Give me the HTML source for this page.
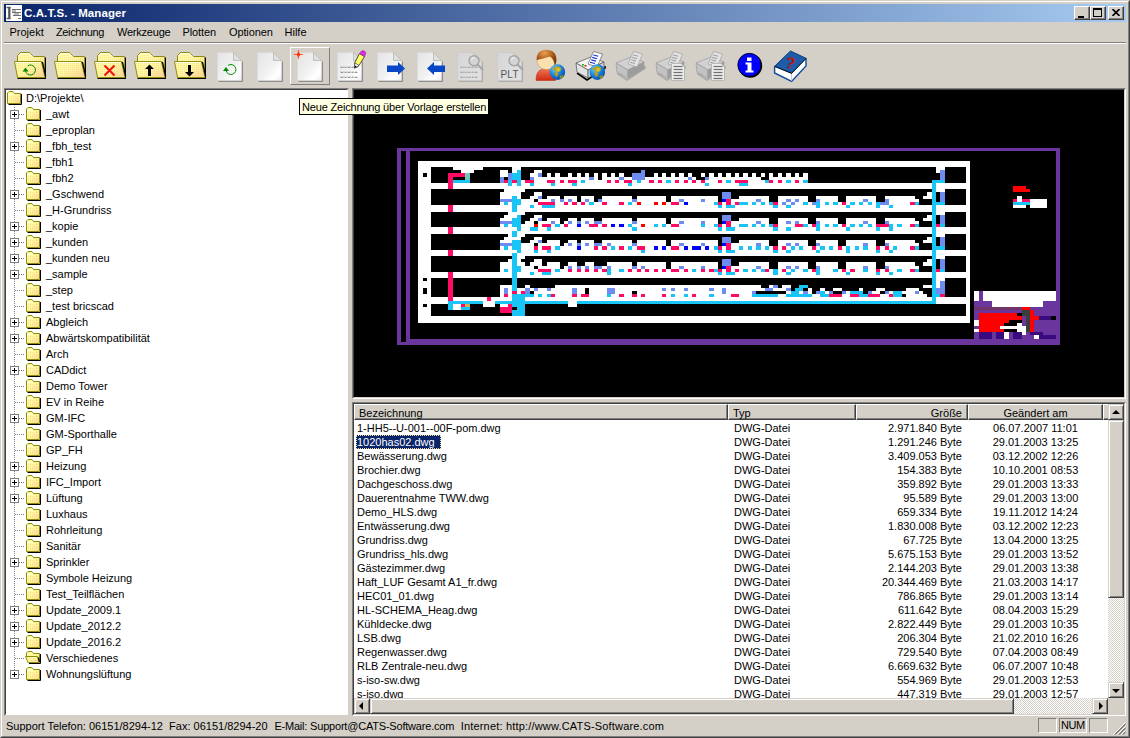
<!DOCTYPE html><html lang="de"><head><meta charset="utf-8"><title>C.A.T.S. - Manager</title><style>
html,body{margin:0;padding:0}
body{width:1130px;height:738px;overflow:hidden;background:#D4D0C8;position:relative;
 font-family:"Liberation Sans",sans-serif;font-size:11px;color:#000;line-height:13px}
.a{position:absolute}
.t{position:absolute;white-space:pre;height:13px;line-height:13px}
#title{left:4px;top:4px;width:1122px;height:18px;background:linear-gradient(to right,#0A246A 0%,#A6CAF0 100%)}
#title .cap{left:20px;top:2.5px;color:#fff;font-weight:bold;font-size:11.5px;letter-spacing:0.1px}
.cb{position:absolute;top:2px;width:16px;height:14px;background:#D4D0C8;box-sizing:border-box;
 border:1px solid;border-color:#fff #404040 #404040 #fff;box-shadow:inset -1px -1px 0 #808080}
.menu .t{top:26px}
.raised{box-sizing:border-box;border:1px solid;border-color:#fff #808080 #808080 #fff}
.sunk{box-sizing:border-box;border:1px solid;border-color:#808080 #fff #fff #808080}
.sunk2{box-sizing:border-box;border:2px solid;border-color:#808080 #fff #fff #808080}
.hdr{position:absolute;top:0;height:16px;background:#D4D0C8;box-sizing:border-box;border:1px solid;border-color:#fff #404040 #404040 #fff;box-shadow:inset -1px -1px 0 #808080}
.sbb{position:absolute;width:16px;height:16px;background:#D4D0C8;box-sizing:border-box;border:1px solid;border-color:#D4D0C8 #404040 #404040 #D4D0C8;box-shadow:inset 1px 1px 0 #fff, inset -1px -1px 0 #808080}
.track{position:absolute;background-color:#EAE8E4;background-image:conic-gradient(#fff 25%,#D4D0C8 0 50%,#fff 0 75%,#D4D0C8 0);background-size:2px 2px}
.tri{position:absolute;width:0;height:0;border:4px solid transparent}
</style></head><body>
<div class="a" style="left:0;top:0;width:1130px;height:738px;box-sizing:border-box;border:1px solid;border-color:#D4D0C8 #404040 #404040 #D4D0C8"></div>
<div class="a" style="left:1px;top:1px;width:1128px;height:736px;box-sizing:border-box;border:1px solid;border-color:#fff #808080 #808080 #fff"></div>
<div id="title" class="a"><svg class="a" style="left:2px;top:1px" width="16" height="16" viewBox="0 0 16 16" ><rect x="0" y="0" width="16" height="16" fill="#fff"/><path d="M0.5 2.5H4.5M0.5 13.5H4.5" fill="none" stroke="#606060" stroke-width="1.4"/><path d="M3.3 2V14" fill="none" stroke="#505050" stroke-width="2.2"/><path d="M6 4.5H15M6 7.5H15M7 10.5H15M12 13.5H15M6 6H10M8 9H13" stroke="#707070" fill="none"/></svg><span class="t cap">C.A.T.S. - Manager</span>
<div class="cb" style="left:1070px"><div class="a" style="left:3px;top:9px;width:6px;height:2px;background:#000"></div></div>
<div class="cb" style="left:1086px"><div class="a" style="left:2px;top:1px;width:9px;height:9px;box-sizing:border-box;border:1px solid #000;border-top-width:2px"></div></div>
<div class="cb" style="left:1104px"><svg class="a" style="left:3px;top:2px" width="8" height="7" viewBox="0 0 8 7"><path d="M0.5 0L7.5 7M7.5 0L0.5 7" stroke="#000" stroke-width="1.6" fill="none"/></svg></div>
</div>
<div class="menu">
<span class="t" style="left:9.5px;letter-spacing:0px">Projekt</span>
<span class="t" style="left:56px;letter-spacing:-0.37px">Zeichnung</span>
<span class="t" style="left:117px;letter-spacing:-0.22px">Werkzeuge</span>
<span class="t" style="left:182.5px;letter-spacing:-0.1px">Plotten</span>
<span class="t" style="left:229px;letter-spacing:-0.12px">Optionen</span>
<span class="t" style="left:284.5px;letter-spacing:0px">Hilfe</span>
</div>
<div class="a" style="left:4px;top:42px;width:1122px;height:1px;background:#808080"></div>
<div class="a" style="left:4px;top:43px;width:1122px;height:1px;background:#fff"></div>
<div class="a raised" style="left:290px;top:47px;width:40px;height:38px"></div>
<svg width="0" height="0" style="position:absolute"><defs><linearGradient id="gPage" x1="0" y1="0" x2="1" y2="1"><stop offset="0" stop-color="#E4E4E4"/><stop offset="0.55" stop-color="#F1F1F1"/><stop offset="0.8" stop-color="#FFFFFF"/><stop offset="1" stop-color="#ECECEC"/></linearGradient><linearGradient id="gPageD" x1="0" y1="0" x2="1" y2="1"><stop offset="0" stop-color="#D6D6D6"/><stop offset="1" stop-color="#E2E2E2"/></linearGradient><pattern id="dith" width="2" height="2" patternUnits="userSpaceOnUse"><rect x="0" y="0" width="1" height="1" fill="#FBC8A0"/></pattern><linearGradient id="gFold" x1="0" y1="0" x2="1" y2="1"><stop offset="0" stop-color="#FFFFA2"/><stop offset="0.5" stop-color="#FFF69A"/><stop offset="1" stop-color="#FAD294"/></linearGradient><radialGradient id="gGlobe" cx="0.35" cy="0.3" r="0.8"><stop offset="0" stop-color="#6FD0FF"/><stop offset="0.5" stop-color="#1586E0"/><stop offset="1" stop-color="#0B3FA0"/></radialGradient><radialGradient id="gHair" cx="0.4" cy="0.2" r="0.9"><stop offset="0" stop-color="#E8A050"/><stop offset="0.6" stop-color="#9A4A10"/><stop offset="1" stop-color="#5A2800"/></radialGradient><linearGradient id="gBody" x1="0" y1="0" x2="0" y2="1"><stop offset="0" stop-color="#F07050"/><stop offset="1" stop-color="#D02810"/></linearGradient><linearGradient id="gPrn" x1="0" y1="0" x2="1" y2="0"><stop offset="0" stop-color="#E6E6E6"/><stop offset="0.5" stop-color="#C4C4C4"/><stop offset="1" stop-color="#9C9C9C"/></linearGradient></defs></svg>
<svg class="a" style="left:14px;top:49px" width="32" height="34" viewBox="0 0 32 34" overflow="visible"><path d="M3.5 13V6.5L6.5 3.5H15.5L19.5 7.5H30.5V28.5H4Z" fill="url(#gFold)" stroke="#8C8C10"/><path d="M3.5 13V6.5L6.5 3.5H15.5L19.5 7.5H30.5V28.5H4Z" fill="url(#dith)" fill-opacity="0.55"/><path d="M31.5 8.5V29.5H5" fill="none" stroke="#000"/><path d="M4.6 7L7 4.6H15L18.5 8.5" fill="none" stroke="#FFFFF0"/><path d="M0.5 12.5H27.3L31 28.5H3.5Z" fill="url(#gFold)" stroke="#8C8C10"/><path d="M1.5 13.5H26.5L30 27.5H4.3Z" fill="url(#dith)" fill-opacity="0.55"/><path d="M28.4 12.8L31.7 27.5" fill="none" stroke="#000" stroke-width="1.3"/><path d="M1.5 13.5H26.8" stroke="#FFFFE8" fill="none"/><path d="M3.5 29.5H31.8" stroke="#000" fill="none"/><path d="M13.6 16.9A5 5 0 1 1 11.5 21.8" fill="none" stroke="#008A00" stroke-width="1"/><path d="M8.5 22.5L11.5 18.6L14.5 22.5Z" fill="#008A00"/></svg>
<svg class="a" style="left:54px;top:49px" width="32" height="34" viewBox="0 0 32 34" overflow="visible"><path d="M3.5 13V6.5L6.5 3.5H15.5L19.5 7.5H30.5V28.5H4Z" fill="url(#gFold)" stroke="#8C8C10"/><path d="M3.5 13V6.5L6.5 3.5H15.5L19.5 7.5H30.5V28.5H4Z" fill="url(#dith)" fill-opacity="0.55"/><path d="M31.5 8.5V29.5H5" fill="none" stroke="#000"/><path d="M4.6 7L7 4.6H15L18.5 8.5" fill="none" stroke="#FFFFF0"/><path d="M0.5 12.5H27.3L31 28.5H3.5Z" fill="url(#gFold)" stroke="#8C8C10"/><path d="M1.5 13.5H26.5L30 27.5H4.3Z" fill="url(#dith)" fill-opacity="0.55"/><path d="M28.4 12.8L31.7 27.5" fill="none" stroke="#000" stroke-width="1.3"/><path d="M1.5 13.5H26.8" stroke="#FFFFE8" fill="none"/><path d="M3.5 29.5H31.8" stroke="#000" fill="none"/></svg>
<svg class="a" style="left:94px;top:49px" width="32" height="34" viewBox="0 0 32 34" overflow="visible"><path d="M3.5 13V6.5L6.5 3.5H15.5L19.5 7.5H30.5V28.5H4Z" fill="url(#gFold)" stroke="#8C8C10"/><path d="M3.5 13V6.5L6.5 3.5H15.5L19.5 7.5H30.5V28.5H4Z" fill="url(#dith)" fill-opacity="0.55"/><path d="M31.5 8.5V29.5H5" fill="none" stroke="#000"/><path d="M4.6 7L7 4.6H15L18.5 8.5" fill="none" stroke="#FFFFF0"/><path d="M0.5 12.5H27.3L31 28.5H3.5Z" fill="url(#gFold)" stroke="#8C8C10"/><path d="M1.5 13.5H26.5L30 27.5H4.3Z" fill="url(#dith)" fill-opacity="0.55"/><path d="M28.4 12.8L31.7 27.5" fill="none" stroke="#000" stroke-width="1.3"/><path d="M1.5 13.5H26.8" stroke="#FFFFE8" fill="none"/><path d="M3.5 29.5H31.8" stroke="#000" fill="none"/><path d="M10.5 16.5L20.5 26.5M20.5 16.5L10.5 26.5" stroke="#F01010" stroke-width="2" fill="none"/></svg>
<svg class="a" style="left:134px;top:49px" width="32" height="34" viewBox="0 0 32 34" overflow="visible"><path d="M3.5 13V6.5L6.5 3.5H15.5L19.5 7.5H30.5V28.5H4Z" fill="url(#gFold)" stroke="#8C8C10"/><path d="M3.5 13V6.5L6.5 3.5H15.5L19.5 7.5H30.5V28.5H4Z" fill="url(#dith)" fill-opacity="0.55"/><path d="M31.5 8.5V29.5H5" fill="none" stroke="#000"/><path d="M4.6 7L7 4.6H15L18.5 8.5" fill="none" stroke="#FFFFF0"/><path d="M0.5 12.5H27.3L31 28.5H3.5Z" fill="url(#gFold)" stroke="#8C8C10"/><path d="M1.5 13.5H26.5L30 27.5H4.3Z" fill="url(#dith)" fill-opacity="0.55"/><path d="M28.4 12.8L31.7 27.5" fill="none" stroke="#000" stroke-width="1.3"/><path d="M1.5 13.5H26.8" stroke="#FFFFE8" fill="none"/><path d="M3.5 29.5H31.8" stroke="#000" fill="none"/><path d="M14 27V20H11L15.5 15.5L20 20H17V27Z" fill="#000"/></svg>
<svg class="a" style="left:174px;top:49px" width="32" height="34" viewBox="0 0 32 34" overflow="visible"><path d="M3.5 13V6.5L6.5 3.5H15.5L19.5 7.5H30.5V28.5H4Z" fill="url(#gFold)" stroke="#8C8C10"/><path d="M3.5 13V6.5L6.5 3.5H15.5L19.5 7.5H30.5V28.5H4Z" fill="url(#dith)" fill-opacity="0.55"/><path d="M31.5 8.5V29.5H5" fill="none" stroke="#000"/><path d="M4.6 7L7 4.6H15L18.5 8.5" fill="none" stroke="#FFFFF0"/><path d="M0.5 12.5H27.3L31 28.5H3.5Z" fill="url(#gFold)" stroke="#8C8C10"/><path d="M1.5 13.5H26.5L30 27.5H4.3Z" fill="url(#dith)" fill-opacity="0.55"/><path d="M28.4 12.8L31.7 27.5" fill="none" stroke="#000" stroke-width="1.3"/><path d="M1.5 13.5H26.8" stroke="#FFFFE8" fill="none"/><path d="M3.5 29.5H31.8" stroke="#000" fill="none"/><path d="M14 16V23H11L15.5 27.5L20 23H17V16Z" fill="#000"/></svg>
<svg class="a" style="left:214px;top:49px" width="32" height="34" viewBox="0 0 32 34" overflow="visible"><path d="M4.5 32.1H28.1V12.5" fill="none" stroke="#8E8E8E" stroke-width="1.9"/><path d="M3.5 3.5H19.5L27.5 11.5V31.5H3.5Z" fill="url(#gPage)" stroke="#D8D8D8" stroke-width="0.6"/><path d="M19.5 3.5V11.5H27.5Z" fill="#E0E0E0" stroke="#B0B0B0" stroke-width="0.7"/><path d="M14.1 16.4A5 5 0 1 1 12.0 21.3" fill="none" stroke="#008A00" stroke-width="1"/><path d="M9.0 22.0L12.0 18.1L15.0 22.0Z" fill="#008A00"/></svg>
<svg class="a" style="left:254px;top:49px" width="32" height="34" viewBox="0 0 32 34" overflow="visible"><path d="M4.5 32.1H28.1V12.5" fill="none" stroke="#8E8E8E" stroke-width="1.9"/><path d="M3.5 3.5H19.5L27.5 11.5V31.5H3.5Z" fill="url(#gPage)" stroke="#D8D8D8" stroke-width="0.6"/><path d="M19.5 3.5V11.5H27.5Z" fill="#E0E0E0" stroke="#B0B0B0" stroke-width="0.7"/></svg>
<svg class="a" style="left:294px;top:49px" width="32" height="34" viewBox="0 0 32 34" overflow="visible"><path d="M4.5 32.1H28.1V12.5" fill="none" stroke="#8E8E8E" stroke-width="1.9"/><path d="M3.5 3.5H19.5L27.5 11.5V31.5H3.5Z" fill="url(#gPage)" stroke="#D8D8D8" stroke-width="0.6"/><path d="M19.5 3.5V11.5H27.5Z" fill="#E0E0E0" stroke="#B0B0B0" stroke-width="0.7"/><path d="M4.5 1V10M0 5.5H9" stroke="#FF6020" stroke-width="1" fill="none"/><path d="M4.5 2.5L6.5 5.5L4.5 8.5L2.5 5.5Z" fill="#FF3010"/></svg>
<svg class="a" style="left:334px;top:49px" width="32" height="34" viewBox="0 0 32 34" overflow="visible"><path d="M4.5 32.1H28.1V12.5" fill="none" stroke="#8E8E8E" stroke-width="1.9"/><path d="M3.5 3.5H19.5L27.5 11.5V31.5H3.5Z" fill="url(#gPage)" stroke="#D8D8D8" stroke-width="0.6"/><path d="M19.5 3.5V11.5H27.5Z" fill="#E0E0E0" stroke="#B0B0B0" stroke-width="0.7"/><path d="M6.5 18.5H23.5" stroke="#9A9A9A" stroke-dasharray="3 1 2 1" fill="none"/><path d="M6.5 17.5H23.5" stroke="#9A9A9A" stroke-dasharray="1 2" stroke-opacity="0.7" fill="none"/><path d="M6.5 23.5H23.5" stroke="#9A9A9A" stroke-dasharray="3 1 2 1" fill="none"/><path d="M6.5 22.5H23.5" stroke="#9A9A9A" stroke-dasharray="1 2" stroke-opacity="0.7" fill="none"/><path d="M6.5 28.5H23.5" stroke="#9A9A9A" stroke-dasharray="3 1 2 1" fill="none"/><path d="M6.5 27.5H23.5" stroke="#9A9A9A" stroke-dasharray="1 2" stroke-opacity="0.7" fill="none"/><path d="M20.8 13.5L25.5 4.5L30.5 7.5L25 16.5L20.6 19Z" fill="#FFFF66" stroke="#202020" stroke-width="0.8"/><path d="M25.5 4.5Q27.5 0.5 30.5 2Q33 4 30.5 7.5Z" fill="#E428E4" stroke="#802080" stroke-width="0.5"/><path d="M20.8 13.8L25 16.5L20.5 19.2Z" fill="#fff" stroke="#202020" stroke-width="0.6"/><path d="M21.3 16.5L22.6 17.7L20.5 19.2Z" fill="#000"/></svg>
<svg class="a" style="left:374px;top:49px" width="32" height="34" viewBox="0 0 32 34" overflow="visible"><path d="M4.5 32.1H28.1V12.5" fill="none" stroke="#8E8E8E" stroke-width="1.9"/><path d="M3.5 3.5H19.5L27.5 11.5V31.5H3.5Z" fill="url(#gPage)" stroke="#D8D8D8" stroke-width="0.6"/><path d="M19.5 3.5V11.5H27.5Z" fill="#E0E0E0" stroke="#B0B0B0" stroke-width="0.7"/><path d="M13 16.5H24V13L31 19.5L24 26V23H13Z" fill="#0848C8"/></svg>
<svg class="a" style="left:414px;top:49px" width="32" height="34" viewBox="0 0 32 34" overflow="visible"><path d="M4.5 32.1H28.1V12.5" fill="none" stroke="#8E8E8E" stroke-width="1.9"/><path d="M3.5 3.5H19.5L27.5 11.5V31.5H3.5Z" fill="url(#gPage)" stroke="#D8D8D8" stroke-width="0.6"/><path d="M19.5 3.5V11.5H27.5Z" fill="#E0E0E0" stroke="#B0B0B0" stroke-width="0.7"/><path d="M31 16.5H20V13L13 19.5L20 26V23H31Z" fill="#0848C8"/></svg>
<svg class="a" style="left:454px;top:49px" width="32" height="34" viewBox="0 0 32 34" overflow="visible"><path d="M4.5 32.1H28.1V12.5" fill="none" stroke="#ACACAC" stroke-width="1.9"/><path d="M3.5 3.5H19.5L27.5 11.5V31.5H3.5Z" fill="url(#gPageD)" stroke="#C8C8C8" stroke-width="0.6"/><path d="M19.5 3.5V11.5H27.5Z" fill="#DADADA" stroke="#BEBEBE" stroke-width="0.7"/><path d="M6.5 18.5H23.5" stroke="#A8A8A8" stroke-dasharray="3 1 2 1" fill="none"/><path d="M6.5 17.5H23.5" stroke="#A8A8A8" stroke-dasharray="1 2" stroke-opacity="0.7" fill="none"/><path d="M6.5 23.5H23.5" stroke="#A8A8A8" stroke-dasharray="3 1 2 1" fill="none"/><path d="M6.5 22.5H23.5" stroke="#A8A8A8" stroke-dasharray="1 2" stroke-opacity="0.7" fill="none"/><path d="M6.5 28.5H23.5" stroke="#A8A8A8" stroke-dasharray="3 1 2 1" fill="none"/><path d="M6.5 27.5H23.5" stroke="#A8A8A8" stroke-dasharray="1 2" stroke-opacity="0.7" fill="none"/><path d="M23.5 15.5L28.5 20.5" stroke="#A8A8A8" stroke-width="2.4" stroke-linecap="round"/><circle cx="20" cy="11.8" r="5" fill="#D4D4D4" stroke="#A4A4A4" stroke-width="1.5"/><path d="M17.5 10.5Q18.5 8 21 8.8" stroke="#F0F0F0" stroke-width="1.4" fill="none"/></svg>
<svg class="a" style="left:494px;top:49px" width="32" height="34" viewBox="0 0 32 34" overflow="visible"><path d="M4.5 32.1H28.1V12.5" fill="none" stroke="#ACACAC" stroke-width="1.9"/><path d="M3.5 3.5H19.5L27.5 11.5V31.5H3.5Z" fill="url(#gPageD)" stroke="#C8C8C8" stroke-width="0.6"/><path d="M19.5 3.5V11.5H27.5Z" fill="#DADADA" stroke="#BEBEBE" stroke-width="0.7"/><path d="M23.5 15.5L28.5 20.5" stroke="#A8A8A8" stroke-width="2.4" stroke-linecap="round"/><circle cx="20" cy="11.8" r="5" fill="#D4D4D4" stroke="#A4A4A4" stroke-width="1.5"/><path d="M17.5 10.5Q18.5 8 21 8.8" stroke="#F0F0F0" stroke-width="1.4" fill="none"/><text x="6.5" y="28.5" font-family="Liberation Sans,sans-serif" font-size="10" fill="#585858" textLength="18">PLT</text></svg>
<svg class="a" style="left:534px;top:49px" width="32" height="34" viewBox="0 0 32 34" overflow="visible"><path d="M2 31.5Q2 21.5 8 20.5H15Q21 21.5 21.5 31.5Z" fill="url(#gBody)" stroke="#B83818" stroke-width="0.6"/><circle cx="12.5" cy="10.8" r="9.8" fill="#FCE0B0" stroke="#C89858" stroke-width="0.6"/><path d="M2.8 11Q2 1 12.5 1Q23 1 22.3 12Q22 15 20.5 16.5Q20.5 10.5 16 7.5Q9 9.5 2.8 11Z" fill="url(#gHair)"/><circle cx="23.4" cy="23.1" r="7.8" fill="url(#gGlobe)"/><path d="M20.4 18.1l4 -1l3 2l-1 3l-3 1l1 3l-2 2l-2 -3l1 -3l-3 -2z" fill="#B8A020"/><path d="M25.4 27.1l3 -1l1 2l-3 2z" fill="#8A9020"/><path d="M22.4 19.1l3 0l1 2l-2 2l-2-1z" fill="#D8C030"/></svg>
<svg class="a" style="left:574px;top:49px" width="32" height="34" viewBox="0 0 32 34" overflow="visible"><path d="M3 24L13 31L31 19L31 17" fill="none" stroke="#000" stroke-width="1.6"/><path d="M2 14L17 8L30 13L14 21Z" fill="#F4F4F4" stroke="#606060" stroke-width="0.8"/><path d="M2 14L14 21V29L3 23Z" fill="#E4E4E4" stroke="#606060" stroke-width="0.8"/><path d="M14 21L30 13V20L14 29Z" fill="#D0D0D0" stroke="#606060" stroke-width="0.8"/><path d="M14 15L19.5 2.5L28.5 5L23 18Z" fill="#FFFFFF" stroke="#606060" stroke-width="0.7"/><path d="M19.3 6.0l5 1.3" stroke="#1030D0" stroke-width="1.1" fill="none"/><path d="M18.2 8.4l5 1.3" stroke="#1030D0" stroke-width="1.1" fill="none"/><path d="M17.1 10.8l5 1.3" stroke="#1030D0" stroke-width="1.1" fill="none"/><path d="M16.0 13.2l5 1.3" stroke="#1030D0" stroke-width="1.1" fill="none"/><rect x="8" y="15" width="2" height="1.5" fill="#10C010"/><rect x="10.5" y="16" width="2" height="1.5" fill="#E01010"/><circle cx="23.3" cy="23.1" r="7.8" fill="url(#gGlobe)"/><path d="M20.3 18.1l4 -1l3 2l-1 3l-3 1l1 3l-2 2l-2 -3l1 -3l-3 -2z" fill="#B8A020"/><path d="M25.3 27.1l3 -1l1 2l-3 2z" fill="#8A9020"/><path d="M22.3 19.1l3 0l1 2l-2 2l-2-1z" fill="#D8C030"/></svg>
<svg class="a" style="left:614px;top:49px" width="32" height="34" viewBox="0 0 32 34" overflow="visible"><path d="M3 24L13 31L31 19L31 17" fill="none" stroke="#A8A8A8" stroke-width="1.6"/><path d="M2 14L17 8L30 13L14 21Z" fill="#D2D2D2" stroke="#A0A0A0" stroke-width="0.8"/><path d="M2 14L14 21V29L3 23Z" fill="#C2C2C2" stroke="#A0A0A0" stroke-width="0.8"/><path d="M14 21L30 13V20L14 29Z" fill="#9C9C9C" stroke="#A0A0A0" stroke-width="0.8"/><path d="M14 15L19.5 2.5L28.5 5L23 18Z" fill="#E4E4E4" stroke="#A0A0A0" stroke-width="0.7"/><path d="M19.3 6.0l5 1.3" stroke="#A0A0A0" stroke-width="1.1" fill="none"/><path d="M18.2 8.4l5 1.3" stroke="#A0A0A0" stroke-width="1.1" fill="none"/><path d="M17.1 10.8l5 1.3" stroke="#A0A0A0" stroke-width="1.1" fill="none"/><path d="M16.0 13.2l5 1.3" stroke="#A0A0A0" stroke-width="1.1" fill="none"/></svg>
<svg class="a" style="left:654px;top:49px" width="32" height="34" viewBox="0 0 32 34" overflow="visible"><path d="M3 24L13 31L31 19L31 17" fill="none" stroke="#A8A8A8" stroke-width="1.6"/><path d="M2 14L17 8L30 13L14 21Z" fill="#D2D2D2" stroke="#A0A0A0" stroke-width="0.8"/><path d="M2 14L14 21V29L3 23Z" fill="#C2C2C2" stroke="#A0A0A0" stroke-width="0.8"/><path d="M14 21L30 13V20L14 29Z" fill="#9C9C9C" stroke="#A0A0A0" stroke-width="0.8"/><path d="M14 15L19.5 2.5L28.5 5L23 18Z" fill="#E4E4E4" stroke="#A0A0A0" stroke-width="0.7"/><path d="M19.3 6.0l5 1.3" stroke="#A0A0A0" stroke-width="1.1" fill="none"/><path d="M18.2 8.4l5 1.3" stroke="#A0A0A0" stroke-width="1.1" fill="none"/><path d="M17.1 10.8l5 1.3" stroke="#A0A0A0" stroke-width="1.1" fill="none"/><path d="M16.0 13.2l5 1.3" stroke="#A0A0A0" stroke-width="1.1" fill="none"/><path d="M17.5 14.5H27L30.5 18V31.5H17.5Z" fill="#EDEDED" stroke="#B8B8B8"/><path d="M19.5 17.5H28.5" stroke="#707070" stroke-width="1.2" fill="none"/><path d="M19.5 20.5H28.5" stroke="#707070" stroke-width="1.2" fill="none"/><path d="M19.5 23.5H28.5" stroke="#707070" stroke-width="1.2" fill="none"/><path d="M19.5 26.5H28.5" stroke="#707070" stroke-width="1.2" fill="none"/><path d="M19.5 29.5H28.5" stroke="#707070" stroke-width="1.2" fill="none"/></svg>
<svg class="a" style="left:694px;top:49px" width="32" height="34" viewBox="0 0 32 34" overflow="visible"><path d="M3 24L13 31L31 19L31 17" fill="none" stroke="#A8A8A8" stroke-width="1.6"/><path d="M2 14L17 8L30 13L14 21Z" fill="#D2D2D2" stroke="#A0A0A0" stroke-width="0.8"/><path d="M2 14L14 21V29L3 23Z" fill="#C2C2C2" stroke="#A0A0A0" stroke-width="0.8"/><path d="M14 21L30 13V20L14 29Z" fill="#9C9C9C" stroke="#A0A0A0" stroke-width="0.8"/><path d="M14 15L19.5 2.5L28.5 5L23 18Z" fill="#E4E4E4" stroke="#A0A0A0" stroke-width="0.7"/><path d="M19.3 6.0l5 1.3" stroke="#A0A0A0" stroke-width="1.1" fill="none"/><path d="M18.2 8.4l5 1.3" stroke="#A0A0A0" stroke-width="1.1" fill="none"/><path d="M17.1 10.8l5 1.3" stroke="#A0A0A0" stroke-width="1.1" fill="none"/><path d="M16.0 13.2l5 1.3" stroke="#A0A0A0" stroke-width="1.1" fill="none"/><path d="M17.5 14.5H27L30.5 18V31.5H17.5Z" fill="#EDEDED" stroke="#B8B8B8"/><path d="M19.5 17.5H28.5" stroke="#707070" stroke-width="1.2" fill="none"/><path d="M19.5 20.5H28.5" stroke="#707070" stroke-width="1.2" fill="none"/><path d="M19.5 23.5H28.5" stroke="#707070" stroke-width="1.2" fill="none"/><path d="M19.5 26.5H28.5" stroke="#707070" stroke-width="1.2" fill="none"/><path d="M19.5 29.5H28.5" stroke="#707070" stroke-width="1.2" fill="none"/></svg>
<svg class="a" style="left:734px;top:49px" width="32" height="34" viewBox="0 0 32 34" overflow="visible"><circle cx="16.2" cy="16.7" r="12" fill="#000"/><circle cx="15.4" cy="15.9" r="11.6" fill="#0000FF" stroke="#000" stroke-width="0.8"/><rect x="13" y="8.5" width="4.5" height="3.5" fill="#fff"/><path d="M11.5 13.5H17.5V21.5H19.5V23.5H11.5V21.5H13.5V15.5H11.5Z" fill="#fff"/></svg>
<svg class="a" style="left:774px;top:49px" width="32" height="34" viewBox="0 0 32 34" overflow="visible"><path d="M0.6 17.3V24L17.6 32.5L32 17V9.3" fill="#fff" stroke="#0C4C9C" stroke-width="1.4"/><path d="M17.6 24.2V32" stroke="#C8C8C8" fill="none"/><path d="M16.5 2L32 9.3L17.6 24.2L0.6 17.3Z" fill="#1C5CA8" stroke="#0A3C84" stroke-width="1"/><path d="M0.8 17.5L17.6 24.4L32 9.5" fill="none" stroke="#000" stroke-width="0.8"/><text x="11.5" y="19.5" font-family="Liberation Sans,sans-serif" font-weight="bold" font-size="16" fill="#B81414" transform="rotate(14 16 14)">?</text></svg>
<div class="a" style="left:4px;top:88px;width:345px;height:628px;background:#fff;box-sizing:border-box;border:1px solid;border-color:#808080 #D4D0C8 #D4D0C8 #808080"></div>
<div class="a" style="left:5px;top:89px;width:343px;height:626px;box-sizing:border-box;border:1px solid;border-color:#404040 #fff #fff #404040"></div>
<div class="a" id="tree" style="left:6px;top:90px;width:341px;height:624px;overflow:hidden">
<svg class="a" style="left:1px;top:0px" width="16" height="16" viewBox="0 0 16 16" ><path d="M0.5 13.5V3L2 1.5H6L7.5 3.5H13.5V13.5Z" fill="url(#gFold)" stroke="#8C8C10"/><path d="M1.5 4.5V12.5H12.5V4.5Z" fill="url(#dith)" fill-opacity="0.45"/><path d="M14.5 4V14.5H1.5" fill="none" stroke="#000"/><path d="M1.5 4.5H7" stroke="#FFFFF0" fill="none"/></svg>
<span class="t" style="left:20px;top:2px">D:\Projekte\</span>
<div class="a" style="left:8px;top:17px;width:1px;height:567px;background-image:linear-gradient(#808080 50%,transparent 50%);background-size:1px 2px"></div>
<div class="a" style="left:9px;top:24px;width:10px;height:1px;background-image:linear-gradient(to right,#808080 50%,transparent 50%);background-size:2px 1px"></div>
<div class="a" style="left:4px;top:20px;width:9px;height:9px;box-sizing:border-box;border:1px solid #808080;background:#fff"><div class="a" style="left:1px;top:3px;width:5px;height:1px;background:#000"></div><div class="a" style="left:3px;top:1px;width:1px;height:5px;background:#000"></div></div>
<svg class="a" style="left:20px;top:16px" width="16" height="16" viewBox="0 0 16 16" ><path d="M0.5 13.5V3L2 1.5H6L7.5 3.5H13.5V13.5Z" fill="url(#gFold)" stroke="#8C8C10"/><path d="M1.5 4.5V12.5H12.5V4.5Z" fill="url(#dith)" fill-opacity="0.45"/><path d="M14.5 4V14.5H1.5" fill="none" stroke="#000"/><path d="M1.5 4.5H7" stroke="#FFFFF0" fill="none"/></svg>
<span class="t" style="left:40px;top:18px">_awt</span>
<div class="a" style="left:9px;top:40px;width:10px;height:1px;background-image:linear-gradient(to right,#808080 50%,transparent 50%);background-size:2px 1px"></div>
<svg class="a" style="left:20px;top:32px" width="16" height="16" viewBox="0 0 16 16" ><path d="M0.5 13.5V3L2 1.5H6L7.5 3.5H13.5V13.5Z" fill="url(#gFold)" stroke="#8C8C10"/><path d="M1.5 4.5V12.5H12.5V4.5Z" fill="url(#dith)" fill-opacity="0.45"/><path d="M14.5 4V14.5H1.5" fill="none" stroke="#000"/><path d="M1.5 4.5H7" stroke="#FFFFF0" fill="none"/></svg>
<span class="t" style="left:40px;top:34px">_eproplan</span>
<div class="a" style="left:9px;top:56px;width:10px;height:1px;background-image:linear-gradient(to right,#808080 50%,transparent 50%);background-size:2px 1px"></div>
<div class="a" style="left:4px;top:52px;width:9px;height:9px;box-sizing:border-box;border:1px solid #808080;background:#fff"><div class="a" style="left:1px;top:3px;width:5px;height:1px;background:#000"></div><div class="a" style="left:3px;top:1px;width:1px;height:5px;background:#000"></div></div>
<svg class="a" style="left:20px;top:48px" width="16" height="16" viewBox="0 0 16 16" ><path d="M0.5 13.5V3L2 1.5H6L7.5 3.5H13.5V13.5Z" fill="url(#gFold)" stroke="#8C8C10"/><path d="M1.5 4.5V12.5H12.5V4.5Z" fill="url(#dith)" fill-opacity="0.45"/><path d="M14.5 4V14.5H1.5" fill="none" stroke="#000"/><path d="M1.5 4.5H7" stroke="#FFFFF0" fill="none"/></svg>
<span class="t" style="left:40px;top:50px">_fbh_test</span>
<div class="a" style="left:9px;top:72px;width:10px;height:1px;background-image:linear-gradient(to right,#808080 50%,transparent 50%);background-size:2px 1px"></div>
<svg class="a" style="left:20px;top:64px" width="16" height="16" viewBox="0 0 16 16" ><path d="M0.5 13.5V3L2 1.5H6L7.5 3.5H13.5V13.5Z" fill="url(#gFold)" stroke="#8C8C10"/><path d="M1.5 4.5V12.5H12.5V4.5Z" fill="url(#dith)" fill-opacity="0.45"/><path d="M14.5 4V14.5H1.5" fill="none" stroke="#000"/><path d="M1.5 4.5H7" stroke="#FFFFF0" fill="none"/></svg>
<span class="t" style="left:40px;top:66px">_fbh1</span>
<div class="a" style="left:9px;top:88px;width:10px;height:1px;background-image:linear-gradient(to right,#808080 50%,transparent 50%);background-size:2px 1px"></div>
<svg class="a" style="left:20px;top:80px" width="16" height="16" viewBox="0 0 16 16" ><path d="M0.5 13.5V3L2 1.5H6L7.5 3.5H13.5V13.5Z" fill="url(#gFold)" stroke="#8C8C10"/><path d="M1.5 4.5V12.5H12.5V4.5Z" fill="url(#dith)" fill-opacity="0.45"/><path d="M14.5 4V14.5H1.5" fill="none" stroke="#000"/><path d="M1.5 4.5H7" stroke="#FFFFF0" fill="none"/></svg>
<span class="t" style="left:40px;top:82px">_fbh2</span>
<div class="a" style="left:9px;top:104px;width:10px;height:1px;background-image:linear-gradient(to right,#808080 50%,transparent 50%);background-size:2px 1px"></div>
<div class="a" style="left:4px;top:100px;width:9px;height:9px;box-sizing:border-box;border:1px solid #808080;background:#fff"><div class="a" style="left:1px;top:3px;width:5px;height:1px;background:#000"></div><div class="a" style="left:3px;top:1px;width:1px;height:5px;background:#000"></div></div>
<svg class="a" style="left:20px;top:96px" width="16" height="16" viewBox="0 0 16 16" ><path d="M0.5 13.5V3L2 1.5H6L7.5 3.5H13.5V13.5Z" fill="url(#gFold)" stroke="#8C8C10"/><path d="M1.5 4.5V12.5H12.5V4.5Z" fill="url(#dith)" fill-opacity="0.45"/><path d="M14.5 4V14.5H1.5" fill="none" stroke="#000"/><path d="M1.5 4.5H7" stroke="#FFFFF0" fill="none"/></svg>
<span class="t" style="left:40px;top:98px">_Gschwend</span>
<div class="a" style="left:9px;top:120px;width:10px;height:1px;background-image:linear-gradient(to right,#808080 50%,transparent 50%);background-size:2px 1px"></div>
<svg class="a" style="left:20px;top:112px" width="16" height="16" viewBox="0 0 16 16" ><path d="M0.5 13.5V3L2 1.5H6L7.5 3.5H13.5V13.5Z" fill="url(#gFold)" stroke="#8C8C10"/><path d="M1.5 4.5V12.5H12.5V4.5Z" fill="url(#dith)" fill-opacity="0.45"/><path d="M14.5 4V14.5H1.5" fill="none" stroke="#000"/><path d="M1.5 4.5H7" stroke="#FFFFF0" fill="none"/></svg>
<span class="t" style="left:40px;top:114px">_H-Grundriss</span>
<div class="a" style="left:9px;top:136px;width:10px;height:1px;background-image:linear-gradient(to right,#808080 50%,transparent 50%);background-size:2px 1px"></div>
<div class="a" style="left:4px;top:132px;width:9px;height:9px;box-sizing:border-box;border:1px solid #808080;background:#fff"><div class="a" style="left:1px;top:3px;width:5px;height:1px;background:#000"></div><div class="a" style="left:3px;top:1px;width:1px;height:5px;background:#000"></div></div>
<svg class="a" style="left:20px;top:128px" width="16" height="16" viewBox="0 0 16 16" ><path d="M0.5 13.5V3L2 1.5H6L7.5 3.5H13.5V13.5Z" fill="url(#gFold)" stroke="#8C8C10"/><path d="M1.5 4.5V12.5H12.5V4.5Z" fill="url(#dith)" fill-opacity="0.45"/><path d="M14.5 4V14.5H1.5" fill="none" stroke="#000"/><path d="M1.5 4.5H7" stroke="#FFFFF0" fill="none"/></svg>
<span class="t" style="left:40px;top:130px">_kopie</span>
<div class="a" style="left:9px;top:152px;width:10px;height:1px;background-image:linear-gradient(to right,#808080 50%,transparent 50%);background-size:2px 1px"></div>
<div class="a" style="left:4px;top:148px;width:9px;height:9px;box-sizing:border-box;border:1px solid #808080;background:#fff"><div class="a" style="left:1px;top:3px;width:5px;height:1px;background:#000"></div><div class="a" style="left:3px;top:1px;width:1px;height:5px;background:#000"></div></div>
<svg class="a" style="left:20px;top:144px" width="16" height="16" viewBox="0 0 16 16" ><path d="M0.5 13.5V3L2 1.5H6L7.5 3.5H13.5V13.5Z" fill="url(#gFold)" stroke="#8C8C10"/><path d="M1.5 4.5V12.5H12.5V4.5Z" fill="url(#dith)" fill-opacity="0.45"/><path d="M14.5 4V14.5H1.5" fill="none" stroke="#000"/><path d="M1.5 4.5H7" stroke="#FFFFF0" fill="none"/></svg>
<span class="t" style="left:40px;top:146px">_kunden</span>
<div class="a" style="left:9px;top:168px;width:10px;height:1px;background-image:linear-gradient(to right,#808080 50%,transparent 50%);background-size:2px 1px"></div>
<div class="a" style="left:4px;top:164px;width:9px;height:9px;box-sizing:border-box;border:1px solid #808080;background:#fff"><div class="a" style="left:1px;top:3px;width:5px;height:1px;background:#000"></div><div class="a" style="left:3px;top:1px;width:1px;height:5px;background:#000"></div></div>
<svg class="a" style="left:20px;top:160px" width="16" height="16" viewBox="0 0 16 16" ><path d="M0.5 13.5V3L2 1.5H6L7.5 3.5H13.5V13.5Z" fill="url(#gFold)" stroke="#8C8C10"/><path d="M1.5 4.5V12.5H12.5V4.5Z" fill="url(#dith)" fill-opacity="0.45"/><path d="M14.5 4V14.5H1.5" fill="none" stroke="#000"/><path d="M1.5 4.5H7" stroke="#FFFFF0" fill="none"/></svg>
<span class="t" style="left:40px;top:162px">_kunden neu</span>
<div class="a" style="left:9px;top:184px;width:10px;height:1px;background-image:linear-gradient(to right,#808080 50%,transparent 50%);background-size:2px 1px"></div>
<div class="a" style="left:4px;top:180px;width:9px;height:9px;box-sizing:border-box;border:1px solid #808080;background:#fff"><div class="a" style="left:1px;top:3px;width:5px;height:1px;background:#000"></div><div class="a" style="left:3px;top:1px;width:1px;height:5px;background:#000"></div></div>
<svg class="a" style="left:20px;top:176px" width="16" height="16" viewBox="0 0 16 16" ><path d="M0.5 13.5V3L2 1.5H6L7.5 3.5H13.5V13.5Z" fill="url(#gFold)" stroke="#8C8C10"/><path d="M1.5 4.5V12.5H12.5V4.5Z" fill="url(#dith)" fill-opacity="0.45"/><path d="M14.5 4V14.5H1.5" fill="none" stroke="#000"/><path d="M1.5 4.5H7" stroke="#FFFFF0" fill="none"/></svg>
<span class="t" style="left:40px;top:178px">_sample</span>
<div class="a" style="left:9px;top:200px;width:10px;height:1px;background-image:linear-gradient(to right,#808080 50%,transparent 50%);background-size:2px 1px"></div>
<svg class="a" style="left:20px;top:192px" width="16" height="16" viewBox="0 0 16 16" ><path d="M0.5 13.5V3L2 1.5H6L7.5 3.5H13.5V13.5Z" fill="url(#gFold)" stroke="#8C8C10"/><path d="M1.5 4.5V12.5H12.5V4.5Z" fill="url(#dith)" fill-opacity="0.45"/><path d="M14.5 4V14.5H1.5" fill="none" stroke="#000"/><path d="M1.5 4.5H7" stroke="#FFFFF0" fill="none"/></svg>
<span class="t" style="left:40px;top:194px">_step</span>
<div class="a" style="left:9px;top:216px;width:10px;height:1px;background-image:linear-gradient(to right,#808080 50%,transparent 50%);background-size:2px 1px"></div>
<svg class="a" style="left:20px;top:208px" width="16" height="16" viewBox="0 0 16 16" ><path d="M0.5 13.5V3L2 1.5H6L7.5 3.5H13.5V13.5Z" fill="url(#gFold)" stroke="#8C8C10"/><path d="M1.5 4.5V12.5H12.5V4.5Z" fill="url(#dith)" fill-opacity="0.45"/><path d="M14.5 4V14.5H1.5" fill="none" stroke="#000"/><path d="M1.5 4.5H7" stroke="#FFFFF0" fill="none"/></svg>
<span class="t" style="left:40px;top:210px">_test bricscad</span>
<div class="a" style="left:9px;top:232px;width:10px;height:1px;background-image:linear-gradient(to right,#808080 50%,transparent 50%);background-size:2px 1px"></div>
<div class="a" style="left:4px;top:228px;width:9px;height:9px;box-sizing:border-box;border:1px solid #808080;background:#fff"><div class="a" style="left:1px;top:3px;width:5px;height:1px;background:#000"></div><div class="a" style="left:3px;top:1px;width:1px;height:5px;background:#000"></div></div>
<svg class="a" style="left:20px;top:224px" width="16" height="16" viewBox="0 0 16 16" ><path d="M0.5 13.5V3L2 1.5H6L7.5 3.5H13.5V13.5Z" fill="url(#gFold)" stroke="#8C8C10"/><path d="M1.5 4.5V12.5H12.5V4.5Z" fill="url(#dith)" fill-opacity="0.45"/><path d="M14.5 4V14.5H1.5" fill="none" stroke="#000"/><path d="M1.5 4.5H7" stroke="#FFFFF0" fill="none"/></svg>
<span class="t" style="left:40px;top:226px">Abgleich</span>
<div class="a" style="left:9px;top:248px;width:10px;height:1px;background-image:linear-gradient(to right,#808080 50%,transparent 50%);background-size:2px 1px"></div>
<div class="a" style="left:4px;top:244px;width:9px;height:9px;box-sizing:border-box;border:1px solid #808080;background:#fff"><div class="a" style="left:1px;top:3px;width:5px;height:1px;background:#000"></div><div class="a" style="left:3px;top:1px;width:1px;height:5px;background:#000"></div></div>
<svg class="a" style="left:20px;top:240px" width="16" height="16" viewBox="0 0 16 16" ><path d="M0.5 13.5V3L2 1.5H6L7.5 3.5H13.5V13.5Z" fill="url(#gFold)" stroke="#8C8C10"/><path d="M1.5 4.5V12.5H12.5V4.5Z" fill="url(#dith)" fill-opacity="0.45"/><path d="M14.5 4V14.5H1.5" fill="none" stroke="#000"/><path d="M1.5 4.5H7" stroke="#FFFFF0" fill="none"/></svg>
<span class="t" style="left:40px;top:242px">Abwärtskompatibilität</span>
<div class="a" style="left:9px;top:264px;width:10px;height:1px;background-image:linear-gradient(to right,#808080 50%,transparent 50%);background-size:2px 1px"></div>
<svg class="a" style="left:20px;top:256px" width="16" height="16" viewBox="0 0 16 16" ><path d="M0.5 13.5V3L2 1.5H6L7.5 3.5H13.5V13.5Z" fill="url(#gFold)" stroke="#8C8C10"/><path d="M1.5 4.5V12.5H12.5V4.5Z" fill="url(#dith)" fill-opacity="0.45"/><path d="M14.5 4V14.5H1.5" fill="none" stroke="#000"/><path d="M1.5 4.5H7" stroke="#FFFFF0" fill="none"/></svg>
<span class="t" style="left:40px;top:258px">Arch</span>
<div class="a" style="left:9px;top:280px;width:10px;height:1px;background-image:linear-gradient(to right,#808080 50%,transparent 50%);background-size:2px 1px"></div>
<div class="a" style="left:4px;top:276px;width:9px;height:9px;box-sizing:border-box;border:1px solid #808080;background:#fff"><div class="a" style="left:1px;top:3px;width:5px;height:1px;background:#000"></div><div class="a" style="left:3px;top:1px;width:1px;height:5px;background:#000"></div></div>
<svg class="a" style="left:20px;top:272px" width="16" height="16" viewBox="0 0 16 16" ><path d="M0.5 13.5V3L2 1.5H6L7.5 3.5H13.5V13.5Z" fill="url(#gFold)" stroke="#8C8C10"/><path d="M1.5 4.5V12.5H12.5V4.5Z" fill="url(#dith)" fill-opacity="0.45"/><path d="M14.5 4V14.5H1.5" fill="none" stroke="#000"/><path d="M1.5 4.5H7" stroke="#FFFFF0" fill="none"/></svg>
<span class="t" style="left:40px;top:274px">CADdict</span>
<div class="a" style="left:9px;top:296px;width:10px;height:1px;background-image:linear-gradient(to right,#808080 50%,transparent 50%);background-size:2px 1px"></div>
<svg class="a" style="left:20px;top:288px" width="16" height="16" viewBox="0 0 16 16" ><path d="M0.5 13.5V3L2 1.5H6L7.5 3.5H13.5V13.5Z" fill="url(#gFold)" stroke="#8C8C10"/><path d="M1.5 4.5V12.5H12.5V4.5Z" fill="url(#dith)" fill-opacity="0.45"/><path d="M14.5 4V14.5H1.5" fill="none" stroke="#000"/><path d="M1.5 4.5H7" stroke="#FFFFF0" fill="none"/></svg>
<span class="t" style="left:40px;top:290px">Demo Tower</span>
<div class="a" style="left:9px;top:312px;width:10px;height:1px;background-image:linear-gradient(to right,#808080 50%,transparent 50%);background-size:2px 1px"></div>
<svg class="a" style="left:20px;top:304px" width="16" height="16" viewBox="0 0 16 16" ><path d="M0.5 13.5V3L2 1.5H6L7.5 3.5H13.5V13.5Z" fill="url(#gFold)" stroke="#8C8C10"/><path d="M1.5 4.5V12.5H12.5V4.5Z" fill="url(#dith)" fill-opacity="0.45"/><path d="M14.5 4V14.5H1.5" fill="none" stroke="#000"/><path d="M1.5 4.5H7" stroke="#FFFFF0" fill="none"/></svg>
<span class="t" style="left:40px;top:306px">EV in Reihe</span>
<div class="a" style="left:9px;top:328px;width:10px;height:1px;background-image:linear-gradient(to right,#808080 50%,transparent 50%);background-size:2px 1px"></div>
<div class="a" style="left:4px;top:324px;width:9px;height:9px;box-sizing:border-box;border:1px solid #808080;background:#fff"><div class="a" style="left:1px;top:3px;width:5px;height:1px;background:#000"></div><div class="a" style="left:3px;top:1px;width:1px;height:5px;background:#000"></div></div>
<svg class="a" style="left:20px;top:320px" width="16" height="16" viewBox="0 0 16 16" ><path d="M0.5 13.5V3L2 1.5H6L7.5 3.5H13.5V13.5Z" fill="url(#gFold)" stroke="#8C8C10"/><path d="M1.5 4.5V12.5H12.5V4.5Z" fill="url(#dith)" fill-opacity="0.45"/><path d="M14.5 4V14.5H1.5" fill="none" stroke="#000"/><path d="M1.5 4.5H7" stroke="#FFFFF0" fill="none"/></svg>
<span class="t" style="left:40px;top:322px">GM-IFC</span>
<div class="a" style="left:9px;top:344px;width:10px;height:1px;background-image:linear-gradient(to right,#808080 50%,transparent 50%);background-size:2px 1px"></div>
<svg class="a" style="left:20px;top:336px" width="16" height="16" viewBox="0 0 16 16" ><path d="M0.5 13.5V3L2 1.5H6L7.5 3.5H13.5V13.5Z" fill="url(#gFold)" stroke="#8C8C10"/><path d="M1.5 4.5V12.5H12.5V4.5Z" fill="url(#dith)" fill-opacity="0.45"/><path d="M14.5 4V14.5H1.5" fill="none" stroke="#000"/><path d="M1.5 4.5H7" stroke="#FFFFF0" fill="none"/></svg>
<span class="t" style="left:40px;top:338px">GM-Sporthalle</span>
<div class="a" style="left:9px;top:360px;width:10px;height:1px;background-image:linear-gradient(to right,#808080 50%,transparent 50%);background-size:2px 1px"></div>
<svg class="a" style="left:20px;top:352px" width="16" height="16" viewBox="0 0 16 16" ><path d="M0.5 13.5V3L2 1.5H6L7.5 3.5H13.5V13.5Z" fill="url(#gFold)" stroke="#8C8C10"/><path d="M1.5 4.5V12.5H12.5V4.5Z" fill="url(#dith)" fill-opacity="0.45"/><path d="M14.5 4V14.5H1.5" fill="none" stroke="#000"/><path d="M1.5 4.5H7" stroke="#FFFFF0" fill="none"/></svg>
<span class="t" style="left:40px;top:354px">GP_FH</span>
<div class="a" style="left:9px;top:376px;width:10px;height:1px;background-image:linear-gradient(to right,#808080 50%,transparent 50%);background-size:2px 1px"></div>
<div class="a" style="left:4px;top:372px;width:9px;height:9px;box-sizing:border-box;border:1px solid #808080;background:#fff"><div class="a" style="left:1px;top:3px;width:5px;height:1px;background:#000"></div><div class="a" style="left:3px;top:1px;width:1px;height:5px;background:#000"></div></div>
<svg class="a" style="left:20px;top:368px" width="16" height="16" viewBox="0 0 16 16" ><path d="M0.5 13.5V3L2 1.5H6L7.5 3.5H13.5V13.5Z" fill="url(#gFold)" stroke="#8C8C10"/><path d="M1.5 4.5V12.5H12.5V4.5Z" fill="url(#dith)" fill-opacity="0.45"/><path d="M14.5 4V14.5H1.5" fill="none" stroke="#000"/><path d="M1.5 4.5H7" stroke="#FFFFF0" fill="none"/></svg>
<span class="t" style="left:40px;top:370px">Heizung</span>
<div class="a" style="left:9px;top:392px;width:10px;height:1px;background-image:linear-gradient(to right,#808080 50%,transparent 50%);background-size:2px 1px"></div>
<div class="a" style="left:4px;top:388px;width:9px;height:9px;box-sizing:border-box;border:1px solid #808080;background:#fff"><div class="a" style="left:1px;top:3px;width:5px;height:1px;background:#000"></div><div class="a" style="left:3px;top:1px;width:1px;height:5px;background:#000"></div></div>
<svg class="a" style="left:20px;top:384px" width="16" height="16" viewBox="0 0 16 16" ><path d="M0.5 13.5V3L2 1.5H6L7.5 3.5H13.5V13.5Z" fill="url(#gFold)" stroke="#8C8C10"/><path d="M1.5 4.5V12.5H12.5V4.5Z" fill="url(#dith)" fill-opacity="0.45"/><path d="M14.5 4V14.5H1.5" fill="none" stroke="#000"/><path d="M1.5 4.5H7" stroke="#FFFFF0" fill="none"/></svg>
<span class="t" style="left:40px;top:386px">IFC_Import</span>
<div class="a" style="left:9px;top:408px;width:10px;height:1px;background-image:linear-gradient(to right,#808080 50%,transparent 50%);background-size:2px 1px"></div>
<div class="a" style="left:4px;top:404px;width:9px;height:9px;box-sizing:border-box;border:1px solid #808080;background:#fff"><div class="a" style="left:1px;top:3px;width:5px;height:1px;background:#000"></div><div class="a" style="left:3px;top:1px;width:1px;height:5px;background:#000"></div></div>
<svg class="a" style="left:20px;top:400px" width="16" height="16" viewBox="0 0 16 16" ><path d="M0.5 13.5V3L2 1.5H6L7.5 3.5H13.5V13.5Z" fill="url(#gFold)" stroke="#8C8C10"/><path d="M1.5 4.5V12.5H12.5V4.5Z" fill="url(#dith)" fill-opacity="0.45"/><path d="M14.5 4V14.5H1.5" fill="none" stroke="#000"/><path d="M1.5 4.5H7" stroke="#FFFFF0" fill="none"/></svg>
<span class="t" style="left:40px;top:402px">Lüftung</span>
<div class="a" style="left:9px;top:424px;width:10px;height:1px;background-image:linear-gradient(to right,#808080 50%,transparent 50%);background-size:2px 1px"></div>
<svg class="a" style="left:20px;top:416px" width="16" height="16" viewBox="0 0 16 16" ><path d="M0.5 13.5V3L2 1.5H6L7.5 3.5H13.5V13.5Z" fill="url(#gFold)" stroke="#8C8C10"/><path d="M1.5 4.5V12.5H12.5V4.5Z" fill="url(#dith)" fill-opacity="0.45"/><path d="M14.5 4V14.5H1.5" fill="none" stroke="#000"/><path d="M1.5 4.5H7" stroke="#FFFFF0" fill="none"/></svg>
<span class="t" style="left:40px;top:418px">Luxhaus</span>
<div class="a" style="left:9px;top:440px;width:10px;height:1px;background-image:linear-gradient(to right,#808080 50%,transparent 50%);background-size:2px 1px"></div>
<svg class="a" style="left:20px;top:432px" width="16" height="16" viewBox="0 0 16 16" ><path d="M0.5 13.5V3L2 1.5H6L7.5 3.5H13.5V13.5Z" fill="url(#gFold)" stroke="#8C8C10"/><path d="M1.5 4.5V12.5H12.5V4.5Z" fill="url(#dith)" fill-opacity="0.45"/><path d="M14.5 4V14.5H1.5" fill="none" stroke="#000"/><path d="M1.5 4.5H7" stroke="#FFFFF0" fill="none"/></svg>
<span class="t" style="left:40px;top:434px">Rohrleitung</span>
<div class="a" style="left:9px;top:456px;width:10px;height:1px;background-image:linear-gradient(to right,#808080 50%,transparent 50%);background-size:2px 1px"></div>
<svg class="a" style="left:20px;top:448px" width="16" height="16" viewBox="0 0 16 16" ><path d="M0.5 13.5V3L2 1.5H6L7.5 3.5H13.5V13.5Z" fill="url(#gFold)" stroke="#8C8C10"/><path d="M1.5 4.5V12.5H12.5V4.5Z" fill="url(#dith)" fill-opacity="0.45"/><path d="M14.5 4V14.5H1.5" fill="none" stroke="#000"/><path d="M1.5 4.5H7" stroke="#FFFFF0" fill="none"/></svg>
<span class="t" style="left:40px;top:450px">Sanitär</span>
<div class="a" style="left:9px;top:472px;width:10px;height:1px;background-image:linear-gradient(to right,#808080 50%,transparent 50%);background-size:2px 1px"></div>
<div class="a" style="left:4px;top:468px;width:9px;height:9px;box-sizing:border-box;border:1px solid #808080;background:#fff"><div class="a" style="left:1px;top:3px;width:5px;height:1px;background:#000"></div><div class="a" style="left:3px;top:1px;width:1px;height:5px;background:#000"></div></div>
<svg class="a" style="left:20px;top:464px" width="16" height="16" viewBox="0 0 16 16" ><path d="M0.5 13.5V3L2 1.5H6L7.5 3.5H13.5V13.5Z" fill="url(#gFold)" stroke="#8C8C10"/><path d="M1.5 4.5V12.5H12.5V4.5Z" fill="url(#dith)" fill-opacity="0.45"/><path d="M14.5 4V14.5H1.5" fill="none" stroke="#000"/><path d="M1.5 4.5H7" stroke="#FFFFF0" fill="none"/></svg>
<span class="t" style="left:40px;top:466px">Sprinkler</span>
<div class="a" style="left:9px;top:488px;width:10px;height:1px;background-image:linear-gradient(to right,#808080 50%,transparent 50%);background-size:2px 1px"></div>
<svg class="a" style="left:20px;top:480px" width="16" height="16" viewBox="0 0 16 16" ><path d="M0.5 13.5V3L2 1.5H6L7.5 3.5H13.5V13.5Z" fill="url(#gFold)" stroke="#8C8C10"/><path d="M1.5 4.5V12.5H12.5V4.5Z" fill="url(#dith)" fill-opacity="0.45"/><path d="M14.5 4V14.5H1.5" fill="none" stroke="#000"/><path d="M1.5 4.5H7" stroke="#FFFFF0" fill="none"/></svg>
<span class="t" style="left:40px;top:482px">Symbole Heizung</span>
<div class="a" style="left:9px;top:504px;width:10px;height:1px;background-image:linear-gradient(to right,#808080 50%,transparent 50%);background-size:2px 1px"></div>
<svg class="a" style="left:20px;top:496px" width="16" height="16" viewBox="0 0 16 16" ><path d="M0.5 13.5V3L2 1.5H6L7.5 3.5H13.5V13.5Z" fill="url(#gFold)" stroke="#8C8C10"/><path d="M1.5 4.5V12.5H12.5V4.5Z" fill="url(#dith)" fill-opacity="0.45"/><path d="M14.5 4V14.5H1.5" fill="none" stroke="#000"/><path d="M1.5 4.5H7" stroke="#FFFFF0" fill="none"/></svg>
<span class="t" style="left:40px;top:498px">Test_Teilflächen</span>
<div class="a" style="left:9px;top:520px;width:10px;height:1px;background-image:linear-gradient(to right,#808080 50%,transparent 50%);background-size:2px 1px"></div>
<div class="a" style="left:4px;top:516px;width:9px;height:9px;box-sizing:border-box;border:1px solid #808080;background:#fff"><div class="a" style="left:1px;top:3px;width:5px;height:1px;background:#000"></div><div class="a" style="left:3px;top:1px;width:1px;height:5px;background:#000"></div></div>
<svg class="a" style="left:20px;top:512px" width="16" height="16" viewBox="0 0 16 16" ><path d="M0.5 13.5V3L2 1.5H6L7.5 3.5H13.5V13.5Z" fill="url(#gFold)" stroke="#8C8C10"/><path d="M1.5 4.5V12.5H12.5V4.5Z" fill="url(#dith)" fill-opacity="0.45"/><path d="M14.5 4V14.5H1.5" fill="none" stroke="#000"/><path d="M1.5 4.5H7" stroke="#FFFFF0" fill="none"/></svg>
<span class="t" style="left:40px;top:514px">Update_2009.1</span>
<div class="a" style="left:9px;top:536px;width:10px;height:1px;background-image:linear-gradient(to right,#808080 50%,transparent 50%);background-size:2px 1px"></div>
<div class="a" style="left:4px;top:532px;width:9px;height:9px;box-sizing:border-box;border:1px solid #808080;background:#fff"><div class="a" style="left:1px;top:3px;width:5px;height:1px;background:#000"></div><div class="a" style="left:3px;top:1px;width:1px;height:5px;background:#000"></div></div>
<svg class="a" style="left:20px;top:528px" width="16" height="16" viewBox="0 0 16 16" ><path d="M0.5 13.5V3L2 1.5H6L7.5 3.5H13.5V13.5Z" fill="url(#gFold)" stroke="#8C8C10"/><path d="M1.5 4.5V12.5H12.5V4.5Z" fill="url(#dith)" fill-opacity="0.45"/><path d="M14.5 4V14.5H1.5" fill="none" stroke="#000"/><path d="M1.5 4.5H7" stroke="#FFFFF0" fill="none"/></svg>
<span class="t" style="left:40px;top:530px">Update_2012.2</span>
<div class="a" style="left:9px;top:552px;width:10px;height:1px;background-image:linear-gradient(to right,#808080 50%,transparent 50%);background-size:2px 1px"></div>
<div class="a" style="left:4px;top:548px;width:9px;height:9px;box-sizing:border-box;border:1px solid #808080;background:#fff"><div class="a" style="left:1px;top:3px;width:5px;height:1px;background:#000"></div><div class="a" style="left:3px;top:1px;width:1px;height:5px;background:#000"></div></div>
<svg class="a" style="left:20px;top:544px" width="16" height="16" viewBox="0 0 16 16" ><path d="M0.5 13.5V3L2 1.5H6L7.5 3.5H13.5V13.5Z" fill="url(#gFold)" stroke="#8C8C10"/><path d="M1.5 4.5V12.5H12.5V4.5Z" fill="url(#dith)" fill-opacity="0.45"/><path d="M14.5 4V14.5H1.5" fill="none" stroke="#000"/><path d="M1.5 4.5H7" stroke="#FFFFF0" fill="none"/></svg>
<span class="t" style="left:40px;top:546px">Update_2016.2</span>
<div class="a" style="left:9px;top:568px;width:10px;height:1px;background-image:linear-gradient(to right,#808080 50%,transparent 50%);background-size:2px 1px"></div>
<svg class="a" style="left:19px;top:560px" width="17" height="16" viewBox="0 0 17 16" ><path d="M1.5 7V3L3 1.5H7L8.5 3.5H14.5V12.5" fill="url(#gFold)" stroke="#8C8C10"/><path d="M15.5 4V13.5H4" fill="none" stroke="#000"/><path d="M0.5 6.5H12.5L14 12.5H3Z" fill="url(#gFold)" stroke="#8C8C10"/><path d="M2 7.5H12L13 11.5H3.5Z" fill="url(#dith)" fill-opacity="0.45"/><path d="M13.3 7.5L14.6 12" stroke="#000" stroke-width="1.2" fill="none"/></svg>
<span class="t" style="left:40px;top:562px">Verschiedenes</span>
<div class="a" style="left:9px;top:584px;width:10px;height:1px;background-image:linear-gradient(to right,#808080 50%,transparent 50%);background-size:2px 1px"></div>
<div class="a" style="left:4px;top:580px;width:9px;height:9px;box-sizing:border-box;border:1px solid #808080;background:#fff"><div class="a" style="left:1px;top:3px;width:5px;height:1px;background:#000"></div><div class="a" style="left:3px;top:1px;width:1px;height:5px;background:#000"></div></div>
<svg class="a" style="left:20px;top:576px" width="16" height="16" viewBox="0 0 16 16" ><path d="M0.5 13.5V3L2 1.5H6L7.5 3.5H13.5V13.5Z" fill="url(#gFold)" stroke="#8C8C10"/><path d="M1.5 4.5V12.5H12.5V4.5Z" fill="url(#dith)" fill-opacity="0.45"/><path d="M14.5 4V14.5H1.5" fill="none" stroke="#000"/><path d="M1.5 4.5H7" stroke="#FFFFF0" fill="none"/></svg>
<span class="t" style="left:40px;top:578px">Wohnungslüftung</span>
</div>
<div class="a" style="left:352px;top:88px;width:774px;height:311px;background:#000;box-sizing:border-box;border:1px solid;border-color:#808080 #fff #fff #808080"></div>
<div class="a" style="left:353px;top:89px;width:772px;height:309px;box-sizing:border-box;border:1px solid;border-color:#404040 #D4D0C8 #D4D0C8 #404040"></div>
<svg class="a" style="left:397px;top:148px" width="663" height="197" viewBox="0 0 663 197" shape-rendering="crispEdges"><rect width="663" height="197" fill="#000"/><path fill="#6A359C" d="M0 0h663v3h-663zM0 3h4v3h-4zM9 3h4v3h-4zM659 3h4v3h-4zM0 6h4v4h-4zM9 6h4v4h-4zM659 6h4v4h-4zM0 10h4v3h-4zM9 10h4v3h-4zM659 10h4v3h-4zM0 13h4v3h-4zM9 13h4v3h-4zM659 13h4v3h-4zM0 16h4v3h-4zM9 16h4v3h-4zM659 16h4v3h-4zM0 19h4v3h-4zM9 19h4v3h-4zM659 19h4v3h-4zM0 22h4v3h-4zM9 22h4v3h-4zM659 22h4v3h-4zM0 25h4v4h-4zM9 25h4v4h-4zM659 25h4v4h-4zM0 29h4v3h-4zM9 29h4v3h-4zM659 29h4v3h-4zM0 32h4v3h-4zM9 32h4v3h-4zM659 32h4v3h-4zM0 35h4v3h-4zM9 35h4v3h-4zM659 35h4v3h-4zM0 38h4v3h-4zM9 38h4v3h-4zM659 38h4v3h-4zM0 41h4v3h-4zM9 41h4v3h-4zM659 41h4v3h-4zM0 44h4v4h-4zM9 44h4v4h-4zM659 44h4v4h-4zM0 48h4v3h-4zM9 48h4v3h-4zM659 48h4v3h-4zM0 51h4v3h-4zM9 51h4v3h-4zM659 51h4v3h-4zM0 54h4v3h-4zM9 54h4v3h-4zM659 54h4v3h-4zM0 57h4v3h-4zM9 57h4v3h-4zM659 57h4v3h-4zM0 60h4v4h-4zM9 60h4v4h-4zM659 60h4v4h-4zM0 64h4v3h-4zM9 64h4v3h-4zM659 64h4v3h-4zM0 67h4v3h-4zM9 67h4v3h-4zM659 67h4v3h-4zM0 70h4v3h-4zM9 70h4v3h-4zM659 70h4v3h-4zM0 73h4v3h-4zM9 73h4v3h-4zM659 73h4v3h-4zM0 76h4v3h-4zM9 76h4v3h-4zM659 76h4v3h-4zM0 79h4v4h-4zM9 79h4v4h-4zM659 79h4v4h-4zM0 83h4v3h-4zM9 83h4v3h-4zM659 83h4v3h-4zM0 86h4v3h-4zM9 86h4v3h-4zM659 86h4v3h-4zM0 89h4v3h-4zM9 89h4v3h-4zM659 89h4v3h-4zM0 92h4v3h-4zM9 92h4v3h-4zM659 92h4v3h-4zM0 95h4v3h-4zM9 95h4v3h-4zM659 95h4v3h-4zM0 98h4v4h-4zM9 98h4v4h-4zM659 98h4v4h-4zM0 102h4v3h-4zM9 102h4v3h-4zM659 102h4v3h-4zM0 105h4v3h-4zM9 105h4v3h-4zM659 105h4v3h-4zM0 108h4v3h-4zM9 108h4v3h-4zM659 108h4v3h-4zM0 111h4v3h-4zM9 111h4v3h-4zM659 111h4v3h-4zM0 114h4v4h-4zM9 114h4v4h-4zM659 114h4v4h-4zM0 118h4v3h-4zM9 118h4v3h-4zM659 118h4v3h-4zM0 121h4v3h-4zM9 121h4v3h-4zM659 121h4v3h-4zM0 124h4v3h-4zM9 124h4v3h-4zM659 124h4v3h-4zM0 127h4v3h-4zM9 127h4v3h-4zM659 127h4v3h-4zM0 130h4v3h-4zM9 130h4v3h-4zM659 130h4v3h-4zM0 133h4v4h-4zM9 133h4v4h-4zM659 133h4v4h-4zM0 137h4v3h-4zM9 137h4v3h-4zM659 137h4v3h-4zM0 140h4v3h-4zM9 140h4v3h-4zM659 140h4v3h-4zM0 143h4v3h-4zM9 143h4v3h-4zM582 143h4v3h-4zM659 143h4v3h-4zM0 146h4v3h-4zM9 146h4v3h-4zM582 146h4v3h-4zM659 146h4v3h-4zM0 149h4v4h-4zM9 149h4v4h-4zM582 149h4v4h-4zM659 149h4v4h-4zM0 153h4v3h-4zM9 153h4v3h-4zM577 153h18v3h-18zM646 153h17v3h-17zM0 156h4v3h-4zM9 156h4v3h-4zM577 156h18v3h-18zM646 156h17v3h-17zM0 159h4v3h-4zM9 159h4v3h-4zM633 159h30v3h-30zM0 162h4v3h-4zM9 162h4v3h-4zM577 162h48v3h-48zM637 162h26v3h-26zM0 165h4v3h-4zM9 165h4v3h-4zM577 165h5v3h-5zM637 165h26v3h-26zM0 168h4v4h-4zM9 168h4v4h-4zM577 168h5v4h-5zM625 168h4v4h-4zM659 168h4v4h-4zM0 172h4v3h-4zM9 172h4v3h-4zM625 172h4v3h-4zM637 172h26v3h-26zM0 175h4v3h-4zM9 175h4v3h-4zM625 175h4v3h-4zM637 175h26v3h-26zM0 178h4v3h-4zM9 178h4v3h-4zM577 178h5v3h-5zM637 178h26v3h-26zM0 181h4v3h-4zM9 181h4v3h-4zM637 181h26v3h-26zM0 184h4v3h-4zM9 184h4v3h-4zM577 184h5v3h-5zM595 184h4v3h-4zM612 184h4v3h-4zM629 184h4v3h-4zM646 184h17v3h-17zM0 187h4v4h-4zM9 187h4v4h-4zM577 187h5v4h-5zM595 187h4v4h-4zM612 187h4v4h-4zM625 187h12v4h-12zM659 187h4v4h-4zM0 191h4v3h-4zM9 191h654v3h-654zM0 194h663v3h-663z"/><path fill="#FFFFFF" d="M21 13h552v3h-552zM21 16h552v3h-552zM21 19h13v3h-13zM56 19h30v3h-30zM115 19h9v3h-9zM539 19h9v3h-9zM569 19h4v3h-4zM21 22h13v3h-13zM64 22h13v3h-13zM103 22h8v3h-8zM115 22h5v3h-5zM137 22h8v3h-8zM539 22h4v3h-4zM569 22h4v3h-4zM21 25h5v4h-5zM30 25h4v4h-4zM103 25h8v4h-8zM133 25h8v4h-8zM150 25h4v4h-4zM158 25h5v4h-5zM171 25h4v4h-4zM180 25h4v4h-4zM188 25h4v4h-4zM197 25h4v4h-4zM205 25h5v4h-5zM214 25h4v4h-4zM222 25h5v4h-5zM257 25h4v4h-4zM265 25h4v4h-4zM274 25h4v4h-4zM282 25h5v4h-5zM291 25h4v4h-4zM304 25h4v4h-4zM312 25h5v4h-5zM321 25h4v4h-4zM329 25h5v4h-5zM338 25h4v4h-4zM346 25h5v4h-5zM355 25h4v4h-4zM364 25h4v4h-4zM372 25h4v4h-4zM381 25h4v4h-4zM389 25h5v4h-5zM398 25h4v4h-4zM406 25h5v4h-5zM569 25h4v4h-4zM21 29h13v3h-13zM137 29h55v3h-55zM197 29h4v3h-4zM205 29h17v3h-17zM227 29h8v3h-8zM248 29h43v3h-43zM295 29h4v3h-4zM312 29h52v3h-52zM372 29h39v3h-39zM569 29h4v3h-4zM21 32h13v3h-13zM124 32h4v3h-4zM137 32h13v3h-13zM158 32h5v3h-5zM167 32h4v3h-4zM180 32h4v3h-4zM188 32h22v3h-22zM214 32h4v3h-4zM222 32h5v3h-5zM235 32h5v3h-5zM244 32h8v3h-8zM257 32h4v3h-4zM265 32h4v3h-4zM274 32h4v3h-4zM282 32h5v3h-5zM291 32h4v3h-4zM299 32h5v3h-5zM308 32h13v3h-13zM325 32h4v3h-4zM334 32h4v3h-4zM351 32h17v3h-17zM376 32h5v3h-5zM385 32h4v3h-4zM394 32h4v3h-4zM402 32h4v3h-4zM569 32h4v3h-4zM21 35h30v3h-30zM56 35h55v3h-55zM115 35h5v3h-5zM124 35h9v3h-9zM137 35h17v3h-17zM158 35h17v3h-17zM180 35h51v3h-51zM235 35h73v3h-73zM312 35h30v3h-30zM351 35h184v3h-184zM539 35h34v3h-34zM21 38h30v3h-30zM56 38h479v3h-479zM539 38h34v3h-34zM21 41h13v3h-13zM107 41h21v3h-21zM539 41h9v3h-9zM569 41h4v3h-4zM21 44h13v4h-13zM103 44h21v4h-21zM137 44h8v4h-8zM530 44h5v4h-5zM569 44h4v4h-4zM21 48h13v3h-13zM103 48h12v3h-12zM120 48h4v3h-4zM133 48h8v3h-8zM150 48h13v3h-13zM167 48h13v3h-13zM184 48h13v3h-13zM205 48h30v3h-30zM240 48h29v3h-29zM274 48h47v3h-47zM342 48h30v3h-30zM381 48h30v3h-30zM419 48h22v3h-22zM449 48h30v3h-30zM488 48h30v3h-30zM526 48h9v3h-9zM569 48h4v3h-4zM620 48h5v3h-5zM21 51h13v3h-13zM124 51h13v3h-13zM141 51h13v3h-13zM158 51h5v3h-5zM167 51h4v3h-4zM175 51h5v3h-5zM184 51h4v3h-4zM192 51h5v3h-5zM205 51h30v3h-30zM240 51h29v3h-29zM274 51h8v3h-8zM287 51h17v3h-17zM308 51h13v3h-13zM334 51h25v3h-25zM364 51h8v3h-8zM381 51h8v3h-8zM394 51h4v3h-4zM402 51h9v3h-9zM423 51h18v3h-18zM449 51h17v3h-17zM471 51h8v3h-8zM492 51h30v3h-30zM569 51h4v3h-4zM620 51h5v3h-5zM633 51h17v3h-17zM21 54h13v3h-13zM103 54h4v3h-4zM111 54h4v3h-4zM124 54h17v3h-17zM158 54h9v3h-9zM171 54h4v3h-4zM180 54h4v3h-4zM188 54h4v3h-4zM197 54h8v3h-8zM210 54h12v3h-12zM227 54h4v3h-4zM235 54h5v3h-5zM244 54h13v3h-13zM261 54h4v3h-4zM269 54h5v3h-5zM282 54h5v3h-5zM291 54h26v3h-26zM325 54h4v3h-4zM334 54h4v3h-4zM351 54h4v3h-4zM359 54h5v3h-5zM368 54h4v3h-4zM381 54h4v3h-4zM389 54h5v3h-5zM398 54h8v3h-8zM411 54h4v3h-4zM423 54h5v3h-5zM432 54h4v3h-4zM441 54h4v3h-4zM449 54h4v3h-4zM458 54h4v3h-4zM466 54h5v3h-5zM475 54h4v3h-4zM492 54h21v3h-21zM569 54h4v3h-4zM633 54h17v3h-17zM21 57h30v3h-30zM56 57h59v3h-59zM120 57h13v3h-13zM137 57h8v3h-8zM158 57h163v3h-163zM325 57h4v3h-4zM338 57h38v3h-38zM381 57h8v3h-8zM394 57h25v3h-25zM423 57h26v3h-26zM453 57h26v3h-26zM483 57h9v3h-9zM496 57h39v3h-39zM539 57h34v3h-34zM616 57h13v3h-13zM633 57h17v3h-17zM21 60h30v4h-30zM56 60h59v4h-59zM120 60h415v4h-415zM539 60h34v4h-34zM21 64h13v3h-13zM111 64h17v3h-17zM539 64h9v3h-9zM569 64h4v3h-4zM21 67h13v3h-13zM107 67h13v3h-13zM137 67h8v3h-8zM530 67h5v3h-5zM569 67h4v3h-4zM21 70h13v3h-13zM103 70h12v3h-12zM133 70h8v3h-8zM150 70h13v3h-13zM171 70h9v3h-9zM184 70h13v3h-13zM205 70h30v3h-30zM240 70h29v3h-29zM274 70h47v3h-47zM342 70h30v3h-30zM381 70h30v3h-30zM419 70h22v3h-22zM449 70h30v3h-30zM488 70h30v3h-30zM526 70h9v3h-9zM569 70h4v3h-4zM21 73h13v3h-13zM128 73h9v3h-9zM141 73h13v3h-13zM158 73h5v3h-5zM167 73h4v3h-4zM175 73h5v3h-5zM184 73h4v3h-4zM192 73h5v3h-5zM205 73h30v3h-30zM240 73h29v3h-29zM274 73h8v3h-8zM287 73h17v3h-17zM308 73h13v3h-13zM334 73h25v3h-25zM364 73h8v3h-8zM381 73h8v3h-8zM394 73h4v3h-4zM402 73h9v3h-9zM423 73h18v3h-18zM449 73h17v3h-17zM471 73h8v3h-8zM492 73h30v3h-30zM569 73h4v3h-4zM21 76h13v3h-13zM103 76h4v3h-4zM111 76h4v3h-4zM124 76h13v3h-13zM141 76h4v3h-4zM154 76h4v3h-4zM163 76h4v3h-4zM171 76h9v3h-9zM184 76h8v3h-8zM201 76h4v3h-4zM210 76h4v3h-4zM218 76h4v3h-4zM227 76h4v3h-4zM235 76h9v3h-9zM248 76h9v3h-9zM261 76h4v3h-4zM269 76h5v3h-5zM282 76h22v3h-22zM308 76h9v3h-9zM325 76h4v3h-4zM334 76h8v3h-8zM351 76h4v3h-4zM359 76h5v3h-5zM368 76h4v3h-4zM381 76h17v3h-17zM411 76h4v3h-4zM423 76h5v3h-5zM432 76h4v3h-4zM441 76h4v3h-4zM449 76h4v3h-4zM458 76h4v3h-4zM466 76h5v3h-5zM475 76h4v3h-4zM496 76h4v3h-4zM505 76h8v3h-8zM569 76h4v3h-4zM21 79h30v4h-30zM56 79h64v4h-64zM124 79h9v4h-9zM141 79h9v4h-9zM154 79h81v4h-81zM240 79h81v4h-81zM325 79h4v4h-4zM338 79h38v4h-38zM381 79h8v4h-8zM394 79h25v4h-25zM423 79h26v4h-26zM453 79h26v4h-26zM483 79h9v4h-9zM496 79h39v4h-39zM539 79h34v4h-34zM21 83h30v3h-30zM56 83h59v3h-59zM120 83h415v3h-415zM539 83h34v3h-34zM21 86h13v3h-13zM111 86h4v3h-4zM120 86h8v3h-8zM539 86h9v3h-9zM569 86h4v3h-4zM21 89h13v3h-13zM107 89h17v3h-17zM137 89h8v3h-8zM530 89h5v3h-5zM569 89h4v3h-4zM21 92h13v3h-13zM103 92h12v3h-12zM133 92h8v3h-8zM150 92h13v3h-13zM171 92h9v3h-9zM184 92h13v3h-13zM205 92h30v3h-30zM240 92h29v3h-29zM274 92h47v3h-47zM342 92h30v3h-30zM381 92h30v3h-30zM419 92h22v3h-22zM449 92h30v3h-30zM488 92h30v3h-30zM526 92h9v3h-9zM569 92h4v3h-4zM21 95h13v3h-13zM124 95h13v3h-13zM141 95h22v3h-22zM167 95h4v3h-4zM175 95h5v3h-5zM184 95h4v3h-4zM192 95h5v3h-5zM205 95h5v3h-5zM214 95h21v3h-21zM240 95h29v3h-29zM274 95h8v3h-8zM287 95h17v3h-17zM308 95h13v3h-13zM334 95h25v3h-25zM364 95h8v3h-8zM381 95h8v3h-8zM394 95h4v3h-4zM402 95h9v3h-9zM423 95h18v3h-18zM449 95h17v3h-17zM471 95h8v3h-8zM492 95h30v3h-30zM569 95h4v3h-4zM21 98h13v4h-13zM103 98h4v4h-4zM111 98h4v4h-4zM124 98h13v4h-13zM141 98h4v4h-4zM154 98h4v4h-4zM163 98h17v4h-17zM184 98h13v4h-13zM201 98h4v4h-4zM210 98h4v4h-4zM218 98h4v4h-4zM227 98h4v4h-4zM235 98h5v4h-5zM248 98h9v4h-9zM261 98h4v4h-4zM269 98h5v4h-5zM282 98h5v4h-5zM291 98h4v4h-4zM304 98h4v4h-4zM312 98h5v4h-5zM325 98h4v4h-4zM334 98h8v4h-8zM346 98h5v4h-5zM355 98h4v4h-4zM364 98h4v4h-4zM372 98h4v4h-4zM381 98h4v4h-4zM389 98h5v4h-5zM398 98h4v4h-4zM406 98h9v4h-9zM419 98h4v4h-4zM428 98h4v4h-4zM436 98h5v4h-5zM445 98h4v4h-4zM453 98h5v4h-5zM462 98h4v4h-4zM471 98h8v4h-8zM483 98h5v4h-5zM492 98h4v4h-4zM500 98h13v4h-13zM569 98h4v4h-4zM21 102h30v3h-30zM56 102h64v3h-64zM124 102h13v3h-13zM141 102h9v3h-9zM154 102h90v3h-90zM248 102h73v3h-73zM325 102h4v3h-4zM338 102h38v3h-38zM381 102h8v3h-8zM394 102h25v3h-25zM423 102h26v3h-26zM453 102h26v3h-26zM483 102h9v3h-9zM496 102h39v3h-39zM539 102h34v3h-34zM21 105h30v3h-30zM56 105h59v3h-59zM120 105h415v3h-415zM539 105h34v3h-34zM21 108h13v3h-13zM120 108h8v3h-8zM539 108h9v3h-9zM569 108h4v3h-4zM21 111h13v3h-13zM111 111h4v3h-4zM120 111h4v3h-4zM137 111h8v3h-8zM530 111h5v3h-5zM569 111h4v3h-4zM21 114h13v4h-13zM103 114h12v4h-12zM120 114h8v4h-8zM133 114h12v4h-12zM150 114h13v4h-13zM171 114h9v4h-9zM188 114h9v4h-9zM210 114h25v4h-25zM240 114h29v4h-29zM274 114h47v4h-47zM342 114h30v4h-30zM381 114h30v4h-30zM419 114h22v4h-22zM449 114h30v4h-30zM488 114h30v4h-30zM526 114h9v4h-9zM569 114h4v4h-4zM21 118h13v3h-13zM103 118h12v3h-12zM124 118h13v3h-13zM141 118h22v3h-22zM167 118h4v3h-4zM175 118h5v3h-5zM184 118h4v3h-4zM192 118h5v3h-5zM205 118h5v3h-5zM214 118h21v3h-21zM240 118h4v3h-4zM248 118h21v3h-21zM274 118h8v3h-8zM287 118h17v3h-17zM308 118h13v3h-13zM334 118h25v3h-25zM364 118h8v3h-8zM381 118h8v3h-8zM394 118h4v3h-4zM402 118h9v3h-9zM423 118h18v3h-18zM449 118h17v3h-17zM471 118h8v3h-8zM492 118h30v3h-30zM569 118h4v3h-4zM21 121h13v3h-13zM103 121h4v3h-4zM111 121h4v3h-4zM124 121h17v3h-17zM154 121h4v3h-4zM163 121h8v3h-8zM175 121h5v3h-5zM184 121h4v3h-4zM192 121h5v3h-5zM201 121h4v3h-4zM214 121h8v3h-8zM227 121h4v3h-4zM235 121h5v3h-5zM244 121h4v3h-4zM252 121h5v3h-5zM261 121h4v3h-4zM269 121h5v3h-5zM282 121h5v3h-5zM291 121h4v3h-4zM299 121h5v3h-5zM308 121h4v3h-4zM325 121h4v3h-4zM334 121h4v3h-4zM342 121h4v3h-4zM351 121h4v3h-4zM359 121h5v3h-5zM372 121h4v3h-4zM381 121h4v3h-4zM389 121h5v3h-5zM398 121h8v3h-8zM411 121h4v3h-4zM423 121h13v3h-13zM441 121h4v3h-4zM449 121h4v3h-4zM458 121h8v3h-8zM471 121h8v3h-8zM483 121h5v3h-5zM492 121h8v3h-8zM505 121h8v3h-8zM569 121h4v3h-4zM21 124h30v3h-30zM56 124h59v3h-59zM120 124h13v3h-13zM137 124h8v3h-8zM154 124h56v3h-56zM214 124h107v3h-107zM325 124h4v3h-4zM338 124h38v3h-38zM381 124h8v3h-8zM394 124h25v3h-25zM423 124h26v3h-26zM453 124h26v3h-26zM483 124h9v3h-9zM496 124h39v3h-39zM539 124h34v3h-34zM21 127h30v3h-30zM56 127h59v3h-59zM120 127h415v3h-415zM539 127h34v3h-34zM21 130h5v3h-5zM30 130h4v3h-4zM539 130h9v3h-9zM569 130h4v3h-4zM21 133h13v4h-13zM539 133h4v4h-4zM569 133h4v4h-4zM21 137h13v3h-13zM103 137h12v3h-12zM128 137h5v3h-5zM158 137h206v3h-206zM372 137h4v3h-4zM385 137h9v3h-9zM526 137h9v3h-9zM539 137h4v3h-4zM569 137h4v3h-4zM21 140h5v3h-5zM30 140h4v3h-4zM103 140h4v3h-4zM111 140h4v3h-4zM120 140h8v3h-8zM133 140h4v3h-4zM141 140h9v3h-9zM154 140h21v3h-21zM180 140h8v3h-8zM192 140h18v3h-18zM218 140h47v3h-47zM269 140h5v3h-5zM278 140h9v3h-9zM291 140h21v3h-21zM317 140h8v3h-8zM329 140h39v3h-39zM376 140h13v3h-13zM411 140h4v3h-4zM423 140h5v3h-5zM436 140h9v3h-9zM462 140h4v3h-4zM479 140h9v3h-9zM509 140h13v3h-13zM569 140h4v3h-4zM21 143h5v3h-5zM30 143h4v3h-4zM103 143h4v3h-4zM111 143h4v3h-4zM120 143h4v3h-4zM137 143h38v3h-38zM180 143h8v3h-8zM192 143h18v3h-18zM218 143h17v3h-17zM240 143h85v3h-85zM329 143h26v3h-26zM389 143h5v3h-5zM402 143h4v3h-4zM411 143h4v3h-4zM428 143h4v3h-4zM449 143h4v3h-4zM475 143h8v3h-8zM492 143h4v3h-4zM505 143h13v3h-13zM522 143h4v3h-4zM569 143h4v3h-4zM577 143h5v3h-5zM586 143h73v3h-73zM21 146h13v3h-13zM103 146h4v3h-4zM111 146h4v3h-4zM137 146h4v3h-4zM145 146h5v3h-5zM158 146h17v3h-17zM180 146h4v3h-4zM192 146h18v3h-18zM214 146h8v3h-8zM227 146h8v3h-8zM240 146h4v3h-4zM248 146h17v3h-17zM269 146h5v3h-5zM278 146h9v3h-9zM291 146h4v3h-4zM299 146h13v3h-13zM317 146h17v3h-17zM342 146h13v3h-13zM381 146h8v3h-8zM415 146h8v3h-8zM445 146h8v3h-8zM483 146h9v3h-9zM509 146h21v3h-21zM569 146h4v3h-4zM577 146h5v3h-5zM586 146h73v3h-73zM21 149h30v4h-30zM56 149h34v4h-34zM94 149h21v4h-21zM128 149h407v4h-407zM539 149h34v4h-34zM577 149h5v4h-5zM586 149h73v4h-73zM21 153h30v3h-30zM86 153h12v3h-12zM171 153h9v3h-9zM539 153h34v3h-34zM595 153h51v3h-51zM21 156h5v3h-5zM30 156h4v3h-4zM56 156h8v3h-8zM86 156h12v3h-12zM103 156h8v3h-8zM171 156h9v3h-9zM569 156h4v3h-4zM595 156h51v3h-51zM21 159h13v3h-13zM56 159h8v3h-8zM569 159h4v3h-4zM21 162h13v3h-13zM569 162h4v3h-4zM21 165h13v3h-13zM569 165h4v3h-4zM21 168h552v4h-552zM21 172h552v3h-552zM577 172h5v3h-5zM577 175h5v3h-5zM620 175h5v3h-5zM603 178h26v3h-26zM577 181h5v3h-5zM620 181h9v3h-9zM607 184h5v3h-5zM625 184h4v3h-4zM607 187h5v4h-5zM637 187h5v4h-5z"/><path fill="#19C5F7" d="M120 22h4v3h-4zM115 25h9v4h-9zM115 29h9v3h-9zM56 32h17v3h-17zM111 32h4v3h-4zM120 32h4v3h-4zM184 32h4v3h-4zM240 32h4v3h-4zM269 32h5v3h-5zM329 32h5v3h-5zM368 32h4v3h-4zM389 32h5v3h-5zM406 32h5v3h-5zM535 32h13v3h-13zM111 35h4v3h-4zM120 35h4v3h-4zM133 35h4v3h-4zM154 35h4v3h-4zM175 35h5v3h-5zM231 35h4v3h-4zM308 35h4v3h-4zM342 35h9v3h-9zM535 35h4v3h-4zM535 38h4v3h-4zM535 41h4v3h-4zM535 44h4v4h-4zM115 48h5v3h-5zM535 48h4v3h-4zM115 51h9v3h-9zM535 51h4v3h-4zM107 54h4v3h-4zM115 54h9v3h-9zM192 54h5v3h-5zM231 54h4v3h-4zM317 54h4v3h-4zM342 54h9v3h-9zM355 54h4v3h-4zM364 54h4v3h-4zM372 54h4v3h-4zM406 54h5v3h-5zM419 54h4v3h-4zM428 54h4v3h-4zM436 54h5v3h-5zM453 54h5v3h-5zM462 54h4v3h-4zM471 54h4v3h-4zM479 54h4v3h-4zM518 54h4v3h-4zM535 54h13v3h-13zM616 54h17v3h-17zM115 57h5v3h-5zM133 57h4v3h-4zM145 57h13v3h-13zM321 57h4v3h-4zM329 57h9v3h-9zM376 57h5v3h-5zM389 57h5v3h-5zM419 57h4v3h-4zM449 57h4v3h-4zM479 57h4v3h-4zM492 57h4v3h-4zM535 57h4v3h-4zM115 60h5v4h-5zM535 60h4v4h-4zM535 64h4v3h-4zM120 67h4v3h-4zM535 67h4v3h-4zM115 70h9v3h-9zM535 70h4v3h-4zM115 73h9v3h-9zM535 73h4v3h-4zM107 76h4v3h-4zM115 76h9v3h-9zM158 76h5v3h-5zM231 76h4v3h-4zM257 76h4v3h-4zM265 76h4v3h-4zM304 76h4v3h-4zM317 76h4v3h-4zM342 76h9v3h-9zM355 76h4v3h-4zM364 76h4v3h-4zM372 76h4v3h-4zM406 76h5v3h-5zM419 76h4v3h-4zM428 76h4v3h-4zM436 76h5v3h-5zM453 76h5v3h-5zM462 76h4v3h-4zM471 76h4v3h-4zM492 76h4v3h-4zM500 76h5v3h-5zM518 76h4v3h-4zM535 76h4v3h-4zM543 76h5v3h-5zM120 79h4v4h-4zM133 79h8v4h-8zM150 79h4v4h-4zM235 79h5v4h-5zM321 79h4v4h-4zM329 79h9v4h-9zM376 79h5v4h-5zM389 79h5v4h-5zM419 79h4v4h-4zM449 79h4v4h-4zM479 79h4v4h-4zM492 79h4v4h-4zM535 79h4v4h-4zM115 83h5v3h-5zM535 83h4v3h-4zM115 86h5v3h-5zM535 86h4v3h-4zM535 89h4v3h-4zM115 92h9v3h-9zM535 92h4v3h-4zM115 95h9v3h-9zM535 95h4v3h-4zM107 98h4v4h-4zM115 98h9v4h-9zM158 98h5v4h-5zM214 98h4v4h-4zM231 98h4v4h-4zM317 98h4v4h-4zM342 98h4v4h-4zM351 98h4v4h-4zM359 98h5v4h-5zM368 98h4v4h-4zM394 98h4v4h-4zM402 98h4v4h-4zM423 98h5v4h-5zM432 98h4v4h-4zM449 98h4v4h-4zM458 98h4v4h-4zM466 98h5v4h-5zM496 98h4v4h-4zM518 98h4v4h-4zM535 98h13v4h-13zM120 102h4v3h-4zM137 102h4v3h-4zM150 102h4v3h-4zM244 102h4v3h-4zM321 102h4v3h-4zM329 102h9v3h-9zM376 102h5v3h-5zM389 102h5v3h-5zM419 102h4v3h-4zM449 102h4v3h-4zM479 102h4v3h-4zM492 102h4v3h-4zM535 102h4v3h-4zM115 105h5v3h-5zM535 105h4v3h-4zM115 108h5v3h-5zM535 108h4v3h-4zM115 111h5v3h-5zM535 111h4v3h-4zM115 114h5v4h-5zM535 114h4v4h-4zM115 118h9v3h-9zM535 118h4v3h-4zM107 121h4v3h-4zM115 121h9v3h-9zM158 121h5v3h-5zM210 121h4v3h-4zM222 121h5v3h-5zM295 121h4v3h-4zM317 121h4v3h-4zM346 121h5v3h-5zM355 121h4v3h-4zM364 121h4v3h-4zM376 121h5v3h-5zM394 121h4v3h-4zM406 121h5v3h-5zM419 121h4v3h-4zM436 121h5v3h-5zM466 121h5v3h-5zM500 121h5v3h-5zM518 121h4v3h-4zM535 121h4v3h-4zM543 121h5v3h-5zM115 124h5v3h-5zM133 124h4v3h-4zM145 124h9v3h-9zM210 124h4v3h-4zM321 124h4v3h-4zM329 124h9v3h-9zM376 124h5v3h-5zM389 124h5v3h-5zM419 124h4v3h-4zM449 124h4v3h-4zM479 124h4v3h-4zM492 124h4v3h-4zM535 124h4v3h-4zM115 127h5v3h-5zM535 127h4v3h-4zM115 130h5v3h-5zM535 130h4v3h-4zM115 133h5v4h-5zM535 133h4v4h-4zM115 137h5v3h-5zM402 137h9v3h-9zM535 137h4v3h-4zM115 140h5v3h-5zM398 140h8v3h-8zM535 140h4v3h-4zM394 143h8v3h-8zM423 143h5v3h-5zM453 143h13v3h-13zM496 143h9v3h-9zM535 143h4v3h-4zM115 146h22v3h-22zM141 146h4v3h-4zM150 146h4v3h-4zM210 146h4v3h-4zM274 146h4v3h-4zM287 146h4v3h-4zM312 146h5v3h-5zM355 146h26v3h-26zM389 146h26v3h-26zM423 146h9v3h-9zM462 146h9v3h-9zM496 146h9v3h-9zM535 146h8v3h-8zM115 149h13v4h-13zM535 149h4v4h-4zM51 153h35v3h-35zM98 153h73v3h-73zM180 153h359v3h-359zM51 156h5v3h-5zM115 156h13v3h-13zM51 159h5v3h-5zM64 159h9v3h-9zM120 159h8v3h-8zM115 162h13v3h-13zM115 165h13v3h-13z"/><path fill="#FF0A64" d="M51 25h17v4h-17zM51 29h5v3h-5zM51 32h5v3h-5zM107 32h4v3h-4zM115 32h5v3h-5zM128 32h9v3h-9zM150 32h8v3h-8zM163 32h4v3h-4zM171 32h9v3h-9zM210 32h4v3h-4zM218 32h4v3h-4zM227 32h8v3h-8zM252 32h5v3h-5zM261 32h4v3h-4zM278 32h4v3h-4zM287 32h4v3h-4zM295 32h4v3h-4zM304 32h4v3h-4zM321 32h4v3h-4zM338 32h13v3h-13zM372 32h4v3h-4zM381 32h4v3h-4zM398 32h4v3h-4zM51 35h5v3h-5zM51 38h5v3h-5zM329 51h5v3h-5zM616 51h4v3h-4zM625 51h8v3h-8zM141 54h17v3h-17zM167 54h4v3h-4zM175 54h5v3h-5zM184 54h4v3h-4zM205 54h5v3h-5zM222 54h5v3h-5zM274 54h8v3h-8zM321 54h4v3h-4zM329 54h5v3h-5zM338 54h4v3h-4zM376 54h5v3h-5zM445 54h4v3h-4zM513 54h5v3h-5zM51 57h5v3h-5zM51 60h5v4h-5zM329 73h5v3h-5zM145 76h9v3h-9zM167 76h4v3h-4zM192 76h9v3h-9zM205 76h5v3h-5zM274 76h8v3h-8zM321 76h4v3h-4zM329 76h5v3h-5zM376 76h5v3h-5zM398 76h8v3h-8zM415 76h4v3h-4zM445 76h4v3h-4zM479 76h13v3h-13zM513 76h5v3h-5zM539 76h4v3h-4zM51 79h5v4h-5zM51 83h5v3h-5zM329 95h5v3h-5zM137 98h4v4h-4zM145 98h9v4h-9zM197 98h4v4h-4zM205 98h5v4h-5zM222 98h5v4h-5zM240 98h8v4h-8zM274 98h8v4h-8zM321 98h4v4h-4zM329 98h5v4h-5zM376 98h5v4h-5zM385 98h4v4h-4zM415 98h4v4h-4zM441 98h4v4h-4zM479 98h4v4h-4zM488 98h4v4h-4zM513 98h5v4h-5zM51 102h5v3h-5zM51 105h5v3h-5zM329 118h5v3h-5zM141 121h13v3h-13zM171 121h4v3h-4zM180 121h4v3h-4zM188 121h4v3h-4zM197 121h4v3h-4zM205 121h5v3h-5zM231 121h4v3h-4zM240 121h4v3h-4zM248 121h4v3h-4zM257 121h4v3h-4zM265 121h4v3h-4zM274 121h8v3h-8zM287 121h4v3h-4zM304 121h4v3h-4zM312 121h5v3h-5zM321 121h4v3h-4zM329 121h5v3h-5zM338 121h4v3h-4zM368 121h4v3h-4zM385 121h4v3h-4zM415 121h4v3h-4zM445 121h4v3h-4zM453 121h5v3h-5zM479 121h4v3h-4zM488 121h4v3h-4zM513 121h5v3h-5zM539 121h4v3h-4zM51 124h5v3h-5zM51 127h5v3h-5zM51 130h5v3h-5zM51 133h5v4h-5zM51 137h5v3h-5zM51 140h5v3h-5zM51 143h5v3h-5zM115 143h5v3h-5zM124 143h4v3h-4zM51 146h5v3h-5zM107 146h4v3h-4zM154 146h4v3h-4zM175 146h5v3h-5zM184 146h8v3h-8zM222 146h5v3h-5zM235 146h5v3h-5zM244 146h4v3h-4zM265 146h4v3h-4zM295 146h4v3h-4zM334 146h8v3h-8zM432 146h13v3h-13zM453 146h9v3h-9zM471 146h12v3h-12zM492 146h4v3h-4zM543 146h5v3h-5zM51 149h5v4h-5zM90 149h4v4h-4zM64 156h4v3h-4zM111 156h4v3h-4zM103 159h12v3h-12zM103 162h12v3h-12z"/><path fill="#6E8CF0" d="M244 22h4v3h-4zM543 22h5v3h-5zM111 25h4v4h-4zM141 25h4v4h-4zM235 25h13v4h-13zM543 25h5v4h-5zM103 29h4v3h-4zM111 29h4v3h-4zM133 29h4v3h-4zM192 29h5v3h-5zM222 29h5v3h-5zM235 29h13v3h-13zM291 29h4v3h-4zM308 29h4v3h-4zM543 29h5v3h-5zM103 32h4v3h-4zM325 44h9v4h-9zM543 44h5v4h-5zM141 48h4v3h-4zM325 48h9v3h-9zM543 48h5v3h-5zM103 51h12v3h-12zM154 51h4v3h-4zM163 51h4v3h-4zM171 51h4v3h-4zM188 51h4v3h-4zM201 51h4v3h-4zM235 51h5v3h-5zM282 51h5v3h-5zM304 51h4v3h-4zM359 51h5v3h-5zM389 51h5v3h-5zM398 51h4v3h-4zM419 51h4v3h-4zM466 51h5v3h-5zM488 51h4v3h-4zM543 51h5v3h-5zM385 54h4v3h-4zM394 54h4v3h-4zM415 54h4v3h-4zM483 54h9v3h-9zM325 67h9v3h-9zM543 67h5v3h-5zM141 70h4v3h-4zM325 70h9v3h-9zM543 70h5v3h-5zM103 73h12v3h-12zM154 73h4v3h-4zM171 73h4v3h-4zM180 73h4v3h-4zM188 73h4v3h-4zM197 73h8v3h-8zM235 73h5v3h-5zM282 73h5v3h-5zM304 73h4v3h-4zM359 73h5v3h-5zM389 73h5v3h-5zM398 73h4v3h-4zM419 73h4v3h-4zM466 73h5v3h-5zM488 73h4v3h-4zM543 73h5v3h-5zM325 89h9v3h-9zM543 89h5v3h-5zM141 92h4v3h-4zM325 92h9v3h-9zM543 92h5v3h-5zM103 95h12v3h-12zM171 95h4v3h-4zM180 95h4v3h-4zM188 95h4v3h-4zM197 95h8v3h-8zM210 95h4v3h-4zM235 95h5v3h-5zM282 95h5v3h-5zM304 95h4v3h-4zM359 95h5v3h-5zM389 95h5v3h-5zM398 95h4v3h-4zM419 95h4v3h-4zM466 95h5v3h-5zM488 95h4v3h-4zM543 95h5v3h-5zM325 111h9v3h-9zM543 111h5v3h-5zM325 114h9v4h-9zM543 114h5v4h-5zM171 118h4v3h-4zM180 118h4v3h-4zM188 118h4v3h-4zM197 118h8v3h-8zM210 118h4v3h-4zM235 118h5v3h-5zM244 118h4v3h-4zM282 118h5v3h-5zM304 118h4v3h-4zM359 118h5v3h-5zM389 118h5v3h-5zM398 118h4v3h-4zM419 118h4v3h-4zM466 118h5v3h-5zM488 118h4v3h-4zM543 118h5v3h-5zM543 133h5v4h-5zM376 137h5v3h-5zM543 137h5v3h-5zM107 140h4v3h-4zM128 140h5v3h-5zM137 140h4v3h-4zM150 140h4v3h-4zM175 140h5v3h-5zM210 140h8v3h-8zM265 140h4v3h-4zM274 140h4v3h-4zM287 140h4v3h-4zM312 140h5v3h-5zM325 140h4v3h-4zM368 140h8v3h-8zM389 140h5v3h-5zM539 140h9v3h-9zM107 143h4v3h-4zM128 143h5v3h-5zM175 143h5v3h-5zM210 143h8v3h-8zM325 143h4v3h-4zM355 143h4v3h-4zM406 143h5v3h-5zM419 143h4v3h-4zM432 143h4v3h-4zM445 143h4v3h-4zM471 143h4v3h-4zM488 143h4v3h-4zM518 143h4v3h-4zM539 143h9v3h-9z"/><path fill="#FF0000" d="M616 38h13v3h-13zM616 41h17v3h-17zM240 54h4v3h-4zM257 54h4v3h-4zM265 54h4v3h-4zM137 76h4v3h-4zM244 76h4v3h-4zM625 159h8v3h-8zM633 162h4v3h-4zM582 165h38v3h-38zM633 165h4v3h-4zM582 168h43v4h-43zM633 168h9v4h-9zM582 172h30v3h-30zM633 172h4v3h-4zM582 175h25v3h-25zM633 175h4v3h-4zM582 178h21v3h-21zM633 178h4v3h-4zM582 181h25v3h-25zM633 181h4v3h-4z"/><path fill="#0000FF" d="M325 51h4v3h-4zM287 54h4v3h-4zM325 73h4v3h-4zM180 76h4v3h-4zM214 76h4v3h-4zM222 76h5v3h-5zM325 95h4v3h-4zM180 98h4v4h-4zM257 98h4v4h-4zM265 98h4v4h-4zM287 98h4v4h-4zM295 98h9v4h-9zM308 98h4v4h-4zM325 118h4v3h-4z"/><path fill="#6EC8BE" d="M68 25h5v4h-5zM68 29h5v3h-5z"/><path fill="#C8B450" d="M68 156h5v3h-5z"/><path fill="#703468" d="M577 159h48v3h-48z"/><path fill="#3A0A80" d="M642 168h12v4h-12zM582 184h13v3h-13zM599 184h8v3h-8zM616 184h9v3h-9zM633 184h13v3h-13zM582 187h13v4h-13zM599 187h8v4h-8zM616 187h9v4h-9zM642 187h17v4h-17z"/><path fill="#3C3C3C" d="M625 162h8v3h-8zM625 165h8v3h-8zM629 168h4v4h-4zM629 172h4v3h-4zM629 175h4v3h-4zM629 178h4v3h-4zM629 181h4v3h-4z"/></svg>
<div class="a" style="left:299px;top:98px;width:190px;height:17px;box-sizing:border-box;border:1px solid #000;background:#FFFFE1"><span class="t" style="left:2px;top:2px;letter-spacing:-0.18px">Neue Zeichnung über Vorlage erstellen</span></div>
<div class="a" style="left:352px;top:402px;width:774px;height:314px;background:#fff;box-sizing:border-box;border:1px solid;border-color:#808080 #fff #fff #808080"></div>
<div class="a" style="left:353px;top:403px;width:772px;height:312px;box-sizing:border-box;border:1px solid;border-color:#404040 #D4D0C8 #D4D0C8 #404040"></div>
<div class="a" id="list" style="left:354px;top:404px;width:770px;height:310px;overflow:hidden">
<div class="hdr" style="left:0px;width:374px"><span class="t" style="left:4px;top:1.5px">Bezeichnung</span></div>
<div class="hdr" style="left:374px;width:128px"><span class="t" style="left:4px;top:1.5px">Typ</span></div>
<div class="hdr" style="left:502px;width:112px"><span class="t" style="right:5px;top:1.5px">Größe</span></div>
<div class="hdr" style="left:614px;width:135px"><span class="t" style="left:0;right:0;text-align:center;top:1.5px">Geändert am</span></div>
<div class="hdr" style="left:749px;width:30px"></div>
<span class="t" style="left:3px;top:18px">1-HH5--U-001--00F-pom.dwg</span>
<span class="t" style="left:380px;top:18px">DWG-Datei</span>
<span class="t" style="right:162px;top:18px">2.971.840 Byte</span>
<span class="t" style="left:614px;width:135px;text-align:center;top:18px">06.07.2007 11:01</span>
<div class="a" style="left:2px;top:31px;width:85px;height:14px;background:#0A246A;box-sizing:border-box;border:1px dotted #F5DB95"></div>
<span class="t" style="left:3px;top:32px;color:#fff">1020has02.dwg</span>
<span class="t" style="left:380px;top:32px">DWG-Datei</span>
<span class="t" style="right:162px;top:32px">1.291.246 Byte</span>
<span class="t" style="left:614px;width:135px;text-align:center;top:32px">29.01.2003 13:25</span>
<span class="t" style="left:3px;top:46px">Bewässerung.dwg</span>
<span class="t" style="left:380px;top:46px">DWG-Datei</span>
<span class="t" style="right:162px;top:46px">3.409.053 Byte</span>
<span class="t" style="left:614px;width:135px;text-align:center;top:46px">03.12.2002 12:26</span>
<span class="t" style="left:3px;top:60px">Brochier.dwg</span>
<span class="t" style="left:380px;top:60px">DWG-Datei</span>
<span class="t" style="right:162px;top:60px">154.383 Byte</span>
<span class="t" style="left:614px;width:135px;text-align:center;top:60px">10.10.2001 08:53</span>
<span class="t" style="left:3px;top:74px">Dachgeschoss.dwg</span>
<span class="t" style="left:380px;top:74px">DWG-Datei</span>
<span class="t" style="right:162px;top:74px">359.892 Byte</span>
<span class="t" style="left:614px;width:135px;text-align:center;top:74px">29.01.2003 13:33</span>
<span class="t" style="left:3px;top:88px">Dauerentnahme TWW.dwg</span>
<span class="t" style="left:380px;top:88px">DWG-Datei</span>
<span class="t" style="right:162px;top:88px">95.589 Byte</span>
<span class="t" style="left:614px;width:135px;text-align:center;top:88px">29.01.2003 13:00</span>
<span class="t" style="left:3px;top:102px">Demo_HLS.dwg</span>
<span class="t" style="left:380px;top:102px">DWG-Datei</span>
<span class="t" style="right:162px;top:102px">659.334 Byte</span>
<span class="t" style="left:614px;width:135px;text-align:center;top:102px">19.11.2012 14:24</span>
<span class="t" style="left:3px;top:116px">Entwässerung.dwg</span>
<span class="t" style="left:380px;top:116px">DWG-Datei</span>
<span class="t" style="right:162px;top:116px">1.830.008 Byte</span>
<span class="t" style="left:614px;width:135px;text-align:center;top:116px">03.12.2002 12:23</span>
<span class="t" style="left:3px;top:130px">Grundriss.dwg</span>
<span class="t" style="left:380px;top:130px">DWG-Datei</span>
<span class="t" style="right:162px;top:130px">67.725 Byte</span>
<span class="t" style="left:614px;width:135px;text-align:center;top:130px">13.04.2000 13:25</span>
<span class="t" style="left:3px;top:144px">Grundriss_hls.dwg</span>
<span class="t" style="left:380px;top:144px">DWG-Datei</span>
<span class="t" style="right:162px;top:144px">5.675.153 Byte</span>
<span class="t" style="left:614px;width:135px;text-align:center;top:144px">29.01.2003 13:52</span>
<span class="t" style="left:3px;top:158px">Gästezimmer.dwg</span>
<span class="t" style="left:380px;top:158px">DWG-Datei</span>
<span class="t" style="right:162px;top:158px">2.144.203 Byte</span>
<span class="t" style="left:614px;width:135px;text-align:center;top:158px">29.01.2003 13:38</span>
<span class="t" style="left:3px;top:172px">Haft_LUF Gesamt A1_fr.dwg</span>
<span class="t" style="left:380px;top:172px">DWG-Datei</span>
<span class="t" style="right:162px;top:172px">20.344.469 Byte</span>
<span class="t" style="left:614px;width:135px;text-align:center;top:172px">21.03.2003 14:17</span>
<span class="t" style="left:3px;top:186px">HEC01_01.dwg</span>
<span class="t" style="left:380px;top:186px">DWG-Datei</span>
<span class="t" style="right:162px;top:186px">786.865 Byte</span>
<span class="t" style="left:614px;width:135px;text-align:center;top:186px">29.01.2003 13:14</span>
<span class="t" style="left:3px;top:200px">HL-SCHEMA_Heag.dwg</span>
<span class="t" style="left:380px;top:200px">DWG-Datei</span>
<span class="t" style="right:162px;top:200px">611.642 Byte</span>
<span class="t" style="left:614px;width:135px;text-align:center;top:200px">08.04.2003 15:29</span>
<span class="t" style="left:3px;top:214px">Kühldecke.dwg</span>
<span class="t" style="left:380px;top:214px">DWG-Datei</span>
<span class="t" style="right:162px;top:214px">2.822.449 Byte</span>
<span class="t" style="left:614px;width:135px;text-align:center;top:214px">29.01.2003 10:35</span>
<span class="t" style="left:3px;top:228px">LSB.dwg</span>
<span class="t" style="left:380px;top:228px">DWG-Datei</span>
<span class="t" style="right:162px;top:228px">206.304 Byte</span>
<span class="t" style="left:614px;width:135px;text-align:center;top:228px">21.02.2010 16:26</span>
<span class="t" style="left:3px;top:242px">Regenwasser.dwg</span>
<span class="t" style="left:380px;top:242px">DWG-Datei</span>
<span class="t" style="right:162px;top:242px">729.540 Byte</span>
<span class="t" style="left:614px;width:135px;text-align:center;top:242px">07.04.2003 08:49</span>
<span class="t" style="left:3px;top:256px">RLB Zentrale-neu.dwg</span>
<span class="t" style="left:380px;top:256px">DWG-Datei</span>
<span class="t" style="right:162px;top:256px">6.669.632 Byte</span>
<span class="t" style="left:614px;width:135px;text-align:center;top:256px">06.07.2007 10:48</span>
<span class="t" style="left:3px;top:270px">s-iso-sw.dwg</span>
<span class="t" style="left:380px;top:270px">DWG-Datei</span>
<span class="t" style="right:162px;top:270px">554.969 Byte</span>
<span class="t" style="left:614px;width:135px;text-align:center;top:270px">29.01.2003 12:53</span>
<span class="t" style="left:3px;top:284px">s-iso.dwg</span>
<span class="t" style="left:380px;top:284px">DWG-Datei</span>
<span class="t" style="right:162px;top:284px">447.319 Byte</span>
<span class="t" style="left:614px;width:135px;text-align:center;top:284px">29.01.2003 12:57</span>
<div class="track" style="left:754px;top:0;width:16px;height:294px"></div>
<div class="sbb" style="left:754px;top:0"><div class="tri" style="left:3px;top:5px;border-bottom-color:#000;border-top-width:0;border-bottom-width:4px"></div></div>
<div class="sbb" style="left:754px;top:16px;height:178px"></div>
<div class="sbb" style="left:754px;top:278px"><div class="tri" style="left:3px;top:6px;border-top-color:#000;border-bottom-width:0;border-top-width:4px"></div></div>
<div class="track" style="left:0;top:294px;width:754px;height:16px"></div>
<div class="sbb" style="left:0;top:294px"><div class="tri" style="left:4px;top:3px;border-right-color:#000;border-left-width:0;border-right-width:4px"></div></div>
<div class="sbb" style="left:16px;top:294px;width:644px"></div>
<div class="sbb" style="left:738px;top:294px"><div class="tri" style="left:6px;top:3px;border-left-color:#000;border-right-width:0;border-left-width:4px"></div></div>
<div class="a" style="left:754px;top:294px;width:16px;height:16px;background:#D4D0C8"></div>
</div>
<span class="t" style="left:6px;top:720px">Support Telefon: 06151/8294-12  Fax: 06151/8294-20  </span>
<span class="t" style="left:274.4px;top:720px;letter-spacing:-0.2px">E-Mail: Support@CATS-Software.com  </span>
<span class="t" style="left:460.7px;top:720px;letter-spacing:0.18px">Internet: http://www.CATS-Software.com</span>
<div class="a sunk" style="left:1038px;top:718px;width:19px;height:15px"></div>
<div class="a sunk" style="left:1059px;top:718px;width:28px;height:15px"><span class="t" style="left:1px;top:0px;letter-spacing:-0.4px">NUM</span></div>
<div class="a sunk" style="left:1089px;top:718px;width:19px;height:15px"></div>
<svg class="a" style="left:1113px;top:722px" width="13" height="13" viewBox="0 0 13 13"><g stroke-width="1" fill="none"><path d="M12.5 0.5L0.5 12.5M12.5 4.5L4.5 12.5M12.5 8.5L8.5 12.5" stroke="#fff"/><path d="M12.5 1.5L1.5 12.5M12.5 2.5L2.5 12.5M12.5 5.5L5.5 12.5M12.5 6.5L6.5 12.5M12.5 9.5L9.5 12.5M12.5 10.5L10.5 12.5" stroke="#808080"/></g></svg>
</body></html>
